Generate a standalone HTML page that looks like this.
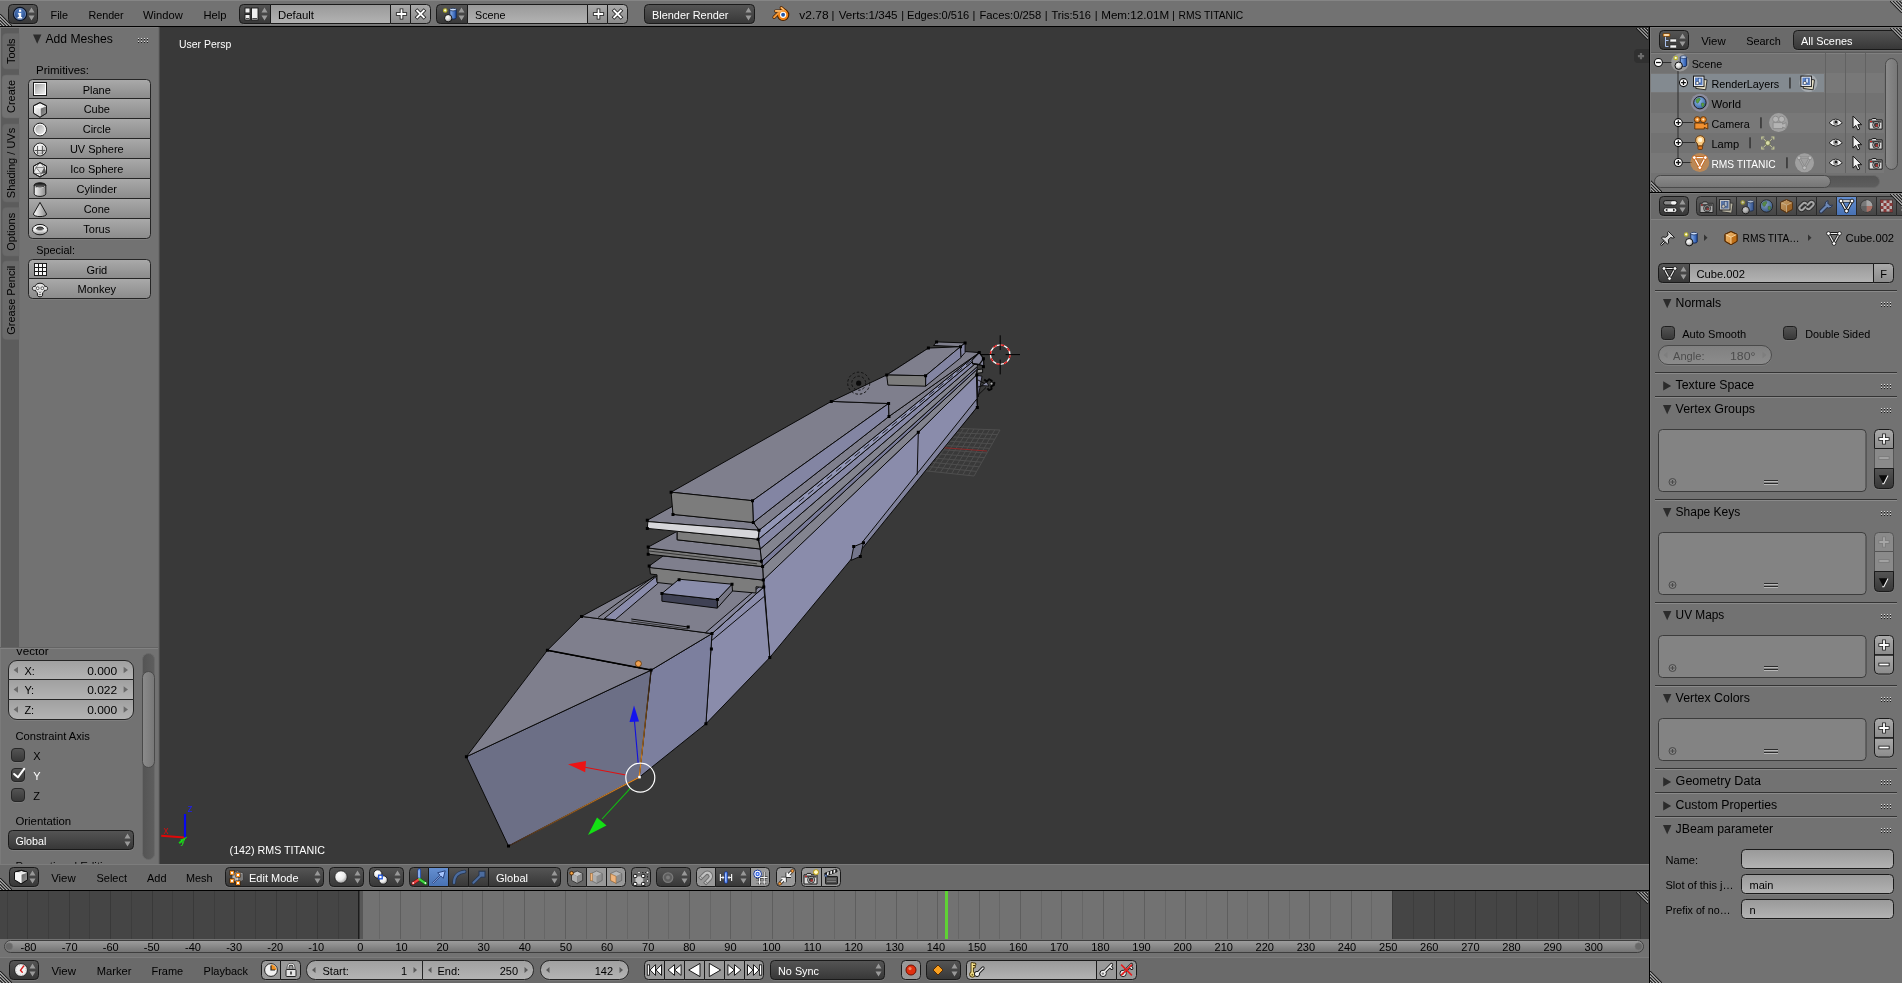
<!DOCTYPE html>
<html lang="en"><head><meta charset="utf-8"><title>Blender - RMS TITANIC</title>
<style>html,body{margin:0;padding:0;background:#727272;overflow:hidden}body{width:1902px;height:983px}svg{display:block;font-family:"Liberation Sans",sans-serif;will-change:transform}text{white-space:pre}</style></head><body>
<svg width="1902" height="983" viewBox="0 0 1902 983" font-family='"Liberation Sans", sans-serif' font-size="11">
<defs>
<linearGradient id="gTool" x1="0" y1="0" x2="0" y2="1"><stop offset="0" stop-color="#aaaaaa"/><stop offset="1" stop-color="#8b8b8b"/></linearGradient>
<linearGradient id="gMenu" x1="0" y1="0" x2="0" y2="1"><stop offset="0" stop-color="#555555"/><stop offset="1" stop-color="#373737"/></linearGradient>
<linearGradient id="gText" x1="0" y1="0" x2="0" y2="1"><stop offset="0" stop-color="#999999"/><stop offset="1" stop-color="#b3b3b3"/></linearGradient>
<linearGradient id="gNum" x1="0" y1="0" x2="0" y2="1"><stop offset="0" stop-color="#a0a0a0"/><stop offset="1" stop-color="#b4b4b4"/></linearGradient>
<linearGradient id="gNumDis" x1="0" y1="0" x2="0" y2="1"><stop offset="0" stop-color="#808080"/><stop offset="1" stop-color="#8c8c8c"/></linearGradient>
<linearGradient id="gSel" x1="0" y1="0" x2="0" y2="1"><stop offset="0" stop-color="#658fd1"/><stop offset="1" stop-color="#4771b3"/></linearGradient>
<linearGradient id="gOpt" x1="0" y1="0" x2="0" y2="1"><stop offset="0" stop-color="#555555"/><stop offset="1" stop-color="#373737"/></linearGradient>
<linearGradient id="gScroll" x1="0" y1="0" x2="0" y2="1"><stop offset="0" stop-color="#8b8b8b"/><stop offset="1" stop-color="#757575"/></linearGradient>
<linearGradient id="gScrollV" x1="0" y1="0" x2="1" y2="0"><stop offset="0" stop-color="#8b8b8b"/><stop offset="1" stop-color="#777777"/></linearGradient>
<linearGradient id="gScrollTrack" x1="0" y1="0" x2="0" y2="1"><stop offset="0" stop-color="#545454"/><stop offset="1" stop-color="#5e5e5e"/></linearGradient>
<linearGradient id="gScrollTrackV" x1="0" y1="0" x2="1" y2="0"><stop offset="0" stop-color="#545454"/><stop offset="1" stop-color="#5e5e5e"/></linearGradient>
<linearGradient id="gTlScroll" x1="0" y1="0" x2="0" y2="1"><stop offset="0" stop-color="#9e9e9e"/><stop offset="1" stop-color="#727272"/></linearGradient>
<radialGradient id="gBall" cx="0.4" cy="0.35" r="0.7"><stop offset="0" stop-color="#ffffff"/><stop offset="0.5" stop-color="#d8d8d8"/><stop offset="1" stop-color="#7a7a7a"/></radialGradient>
<radialGradient id="gBall2" cx="0.38" cy="0.32" r="0.75"><stop offset="0" stop-color="#ffffff"/><stop offset="0.55" stop-color="#ececec"/><stop offset="1" stop-color="#8c8c8c"/></radialGradient>
<radialGradient id="gInfo" cx="0.5" cy="0.4" r="0.6"><stop offset="0" stop-color="#5a86c8"/><stop offset="1" stop-color="#1c3f80"/></radialGradient>
<radialGradient id="gEarth" cx="0.4" cy="0.35" r="0.7"><stop offset="0" stop-color="#9cc4f0"/><stop offset="1" stop-color="#2d5a9c"/></radialGradient>
<linearGradient id="gCube" x1="0" y1="0" x2="1" y2="1"><stop offset="0" stop-color="#f4c27a"/><stop offset="1" stop-color="#c87820"/></linearGradient>
<linearGradient id="gCyl" x1="0" y1="0" x2="1" y2="0"><stop offset="0" stop-color="#8db4ee"/><stop offset="1" stop-color="#1f4fa8"/></linearGradient>
<linearGradient id="gPlane" x1="0" y1="0" x2="1" y2="1"><stop offset="0" stop-color="#9c9c9c"/><stop offset="1" stop-color="#fafafa"/></linearGradient>
<linearGradient id="gCubeR" x1="0" y1="0" x2="1" y2="1"><stop offset="0" stop-color="#5c5c5c"/><stop offset="1" stop-color="#a0a0a0"/></linearGradient>
<linearGradient id="gCubeL" x1="0" y1="0" x2="1" y2="1"><stop offset="0" stop-color="#ffffff"/><stop offset="1" stop-color="#c4c4c4"/></linearGradient>
<linearGradient id="gCylTop" x1="0" y1="0" x2="0" y2="1"><stop offset="0" stop-color="#0c0c0c"/><stop offset="1" stop-color="#7a7a7a"/></linearGradient>
<linearGradient id="gTorus" x1="0" y1="0" x2="0" y2="1"><stop offset="0" stop-color="#ffffff"/><stop offset="0.6" stop-color="#e8e8e8"/><stop offset="1" stop-color="#8a8a8a"/></linearGradient>
<linearGradient id="gCylG" x1="0" y1="0" x2="1" y2="0"><stop offset="0" stop-color="#f4f4f4"/><stop offset="1" stop-color="#8a8a8a"/></linearGradient>
<linearGradient id="gConeG" x1="0" y1="0" x2="1" y2="0"><stop offset="0" stop-color="#ffffff"/><stop offset="1" stop-color="#8a8a8a"/></linearGradient>
<linearGradient id="gTabBtn" x1="0" y1="0" x2="0" y2="1"><stop offset="0" stop-color="#5c5c5c"/><stop offset="1" stop-color="#454545"/></linearGradient>
</defs>
<g id="areas" >
<rect x="0" y="0" width="1902" height="983" fill="#727272"/>
<rect x="160" y="27" width="1489" height="837" fill="#393939"/>
<rect x="0" y="26" width="1902" height="1" fill="#000"/>
<rect x="1649" y="27" width="1" height="956" fill="#000"/>
</g>
<g id="info-header" >
<rect x="0" y="0" width="1902" height="26" fill="#727272"/>
<rect x="0" y="0" width="1902" height="1" fill="#858585"/>
<clipPath id="cc1"><rect x="0" y="14" width="12" height="12"/></clipPath><g clip-path="url(#cc1)">
<path d="M-1,13L13,27" fill="none" stroke="#1c1c1c" stroke-width="1.15"/>
<path d="M-1,14.6L11.4,27" fill="none" stroke="#b4b4b4" stroke-width="1.1"/>
<path d="M-1,16.2L9.8,27" fill="none" stroke="#1c1c1c" stroke-width="1.15"/>
<path d="M-1,17.8L8.2,27" fill="none" stroke="#b4b4b4" stroke-width="1.1"/>
<path d="M-1,19.4L6.6,27" fill="none" stroke="#1c1c1c" stroke-width="1.15"/>
<path d="M-1,21.0L5.0,27" fill="none" stroke="#b4b4b4" stroke-width="1.1"/>
<path d="M-1,22.6L3.4000000000000004,27" fill="none" stroke="#1c1c1c" stroke-width="1.15"/>
<path d="M-1,24.200000000000003L1.8000000000000007,27" fill="none" stroke="#b4b4b4" stroke-width="1.1"/>
</g>
<clipPath id="cc2"><rect x="1890" y="1" width="12" height="12"/></clipPath><g clip-path="url(#cc2)">
<path d="M1889,0L1903,14" fill="none" stroke="#1c1c1c" stroke-width="1.15"/>
<path d="M1890.6,0L1903,12.4" fill="none" stroke="#b4b4b4" stroke-width="1.1"/>
<path d="M1892.2,0L1903,10.8" fill="none" stroke="#1c1c1c" stroke-width="1.15"/>
<path d="M1893.8,0L1903,9.2" fill="none" stroke="#b4b4b4" stroke-width="1.1"/>
<path d="M1895.4,0L1903,7.6" fill="none" stroke="#1c1c1c" stroke-width="1.15"/>
<path d="M1897.0,0L1903,6.0" fill="none" stroke="#b4b4b4" stroke-width="1.1"/>
<path d="M1898.6,0L1903,4.4" fill="none" stroke="#1c1c1c" stroke-width="1.15"/>
<path d="M1900.1999999999998,0L1903,2.8000000000000007" fill="none" stroke="#b4b4b4" stroke-width="1.1"/>
</g>
<path d="M12.5,5.5H33.5A4,4 0 0 1 37.5,9.5V20.5A4,4 0 0 1 33.5,24.5H12.5A4,4 0 0 1 8.5,20.5V9.5A4,4 0 0 1 12.5,5.5Z" fill="none" stroke="rgba(255,255,255,0.09)" stroke-width="1"/>
<path d="M12.5,4.5H33.5A4,4 0 0 1 37.5,8.5V19.5A4,4 0 0 1 33.5,23.5H12.5A4,4 0 0 1 8.5,19.5V8.5A4,4 0 0 1 12.5,4.5Z" fill="url(#gMenu)" stroke="#1a1a1a" stroke-width="1"/>
<circle cx="20" cy="14" r="6.6" fill="url(#gInfo)" stroke="#0c1424" stroke-width="1.2"/>
<circle cx="20" cy="14" r="5.6" fill="none" stroke="rgba(255,255,255,0.35)" stroke-width="0.8"/>
<rect x="19" y="9.6" width="2.2" height="2.2" fill="#fff"/>
<path d="M18.2,13h3v4h1v1.4h-4.6v-1.4h1.2v-2.6h-0.6z" fill="#fff"/>
<path d="M28.5,12.5L31.5,7.5L34.5,12.5Z M28.5,15.5L31.5,20.5L34.5,15.5Z" fill="#999"/>
<text x="50.5" y="19.2" font-size="11" fill="#000" textLength="17.5" lengthAdjust="spacingAndGlyphs">File</text>
<text x="88.4" y="19.2" font-size="11" fill="#000" textLength="35.3" lengthAdjust="spacingAndGlyphs">Render</text>
<text x="143" y="19.2" font-size="11" fill="#000" textLength="39.7" lengthAdjust="spacingAndGlyphs">Window</text>
<text x="203.4" y="19.2" font-size="11" fill="#000" textLength="23" lengthAdjust="spacingAndGlyphs">Help</text>
<line x1="243" y1="24.5" x2="271" y2="24.5" stroke="rgba(255,255,255,0.09)" stroke-width="1" />
<path d="M243.5,4.5H270.5V23.5H243.5A4,4 0 0 1 239.5,19.5V8.5A4,4 0 0 1 243.5,4.5Z" fill="url(#gMenu)" stroke="#1a1a1a" stroke-width="1"/>
<rect x="245" y="8" width="5" height="5" fill="#f0f0f0" stroke="#1c1c1c" stroke-width="0.9"/>
<rect x="245" y="14.5" width="5" height="5.5" fill="#f0f0f0" stroke="#1c1c1c" stroke-width="0.9"/>
<rect x="251.5" y="8" width="6.5" height="12" fill="#f0f0f0" stroke="#1c1c1c" stroke-width="0.9"/>
<rect x="245.8" y="18" width="3.4" height="1.2" fill="#4a4a4a"/>
<rect x="252.3" y="18" width="4.9" height="1.2" fill="#4a4a4a"/>
<path d="M261.5,12.5L264.5,7.5L267.5,12.5Z M261.5,15.5L264.5,20.5L267.5,15.5Z" fill="#999"/>
<line x1="270" y1="24.5" x2="391" y2="24.5" stroke="rgba(255,255,255,0.09)" stroke-width="1" />
<path d="M270.5,4.5H390.5V23.5H270.5V4.5Z" fill="url(#gText)" stroke="#1a1a1a" stroke-width="1"/>
<text x="278" y="19.2" font-size="11" fill="#000" textLength="36" lengthAdjust="spacingAndGlyphs">Default</text>
<line x1="390" y1="24.5" x2="411" y2="24.5" stroke="rgba(255,255,255,0.09)" stroke-width="1" />
<path d="M390.5,4.5H410.5V23.5H390.5V4.5Z" fill="url(#gTool)" stroke="#1a1a1a" stroke-width="1"/>
<path d="M395.9,14h11.2M401.5,8.4v11.2" fill="none" stroke="#222" stroke-width="3.6"/>
<path d="M396.8,14h9.4M401.5,9.3v9.4" fill="none" stroke="#fff" stroke-width="1.8"/>
<line x1="410" y1="24.5" x2="427" y2="24.5" stroke="rgba(255,255,255,0.09)" stroke-width="1" />
<path d="M410.5,4.5H426.5A4,4 0 0 1 430.5,8.5V19.5A4,4 0 0 1 426.5,23.5H410.5V4.5Z" fill="url(#gTool)" stroke="#1a1a1a" stroke-width="1"/>
<path d="M416.0,9.5l9,9M425.0,9.5l-9,9" fill="none" stroke="#222" stroke-width="3.6"/>
<path d="M416.5,10l8,8M424.5,10l-8,8" fill="none" stroke="#fff" stroke-width="1.8"/>
<line x1="440" y1="24.5" x2="468" y2="24.5" stroke="rgba(255,255,255,0.09)" stroke-width="1" />
<path d="M440.5,4.5H467.5V23.5H440.5A4,4 0 0 1 436.5,19.5V8.5A4,4 0 0 1 440.5,4.5Z" fill="url(#gMenu)" stroke="#1a1a1a" stroke-width="1"/>
<path d="M449.8,9.6v8.2a3.2,1.3 0 0 0 6.4,0v-8.2z" fill="url(#gCyl)" stroke="#0e2450" stroke-width="0.9"/>
<path d="M449.8,9.6a3.2,1.3 0 0 1 6.4,0a3.2,1.3 0 0 1 -6.4,0z" fill="#cfe0fa" stroke="#0e2450" stroke-width="0.7"/>
<circle cx="448.2" cy="18.2" r="3.7" fill="url(#gBall)" stroke="#111" stroke-width="1"/>
<circle cx="445.2" cy="10.4" r="1.7" fill="#fffce0" stroke="#b8b428" stroke-width="1.1"/>
<path d="M458.5,12.5L461.5,7.5L464.5,12.5Z M458.5,15.5L461.5,20.5L464.5,15.5Z" fill="#999"/>
<line x1="467" y1="24.5" x2="588" y2="24.5" stroke="rgba(255,255,255,0.09)" stroke-width="1" />
<path d="M467.5,4.5H587.5V23.5H467.5V4.5Z" fill="url(#gText)" stroke="#1a1a1a" stroke-width="1"/>
<text x="475" y="19.2" font-size="11" fill="#000" textLength="30.5" lengthAdjust="spacingAndGlyphs">Scene</text>
<line x1="587" y1="24.5" x2="608" y2="24.5" stroke="rgba(255,255,255,0.09)" stroke-width="1" />
<path d="M587.5,4.5H607.5V23.5H587.5V4.5Z" fill="url(#gTool)" stroke="#1a1a1a" stroke-width="1"/>
<path d="M592.9,14h11.2M598.5,8.4v11.2" fill="none" stroke="#222" stroke-width="3.6"/>
<path d="M593.8,14h9.4M598.5,9.3v9.4" fill="none" stroke="#fff" stroke-width="1.8"/>
<line x1="607" y1="24.5" x2="624" y2="24.5" stroke="rgba(255,255,255,0.09)" stroke-width="1" />
<path d="M607.5,4.5H623.5A4,4 0 0 1 627.5,8.5V19.5A4,4 0 0 1 623.5,23.5H607.5V4.5Z" fill="url(#gTool)" stroke="#1a1a1a" stroke-width="1"/>
<path d="M613.0,9.5l9,9M622.0,9.5l-9,9" fill="none" stroke="#222" stroke-width="3.6"/>
<path d="M613.5,10l8,8M621.5,10l-8,8" fill="none" stroke="#fff" stroke-width="1.8"/>
<path d="M648.5,5.5H750.5A4,4 0 0 1 754.5,9.5V20.5A4,4 0 0 1 750.5,24.5H648.5A4,4 0 0 1 644.5,20.5V9.5A4,4 0 0 1 648.5,5.5Z" fill="none" stroke="rgba(255,255,255,0.09)" stroke-width="1"/>
<path d="M648.5,4.5H750.5A4,4 0 0 1 754.5,8.5V19.5A4,4 0 0 1 750.5,23.5H648.5A4,4 0 0 1 644.5,19.5V8.5A4,4 0 0 1 648.5,4.5Z" fill="url(#gMenu)" stroke="#1a1a1a" stroke-width="1"/>
<text x="652" y="19.2" font-size="11" fill="#fff" textLength="76.5" lengthAdjust="spacingAndGlyphs">Blender Render</text>
<path d="M745.5,12.5L748.5,7.5L751.5,12.5Z M745.5,15.5L748.5,20.5L751.5,15.5Z" fill="#999"/>
<path d="M781.3,7.9L785.4,11.2M775.7,11.1L782.5,11.3M774.1,17.3L779.8,11.6" fill="none" stroke="#4a2200" stroke-width="3.4" stroke-linecap="round"/>
<circle cx="783.1" cy="14.8" r="5.7" fill="#f08010" stroke="#4a2200" stroke-width="1.1"/>
<path d="M781.3,7.9L785.4,11.2M775.7,11.1L782.5,11.3M774.1,17.3L779.8,11.6" fill="none" stroke="#f59a38" stroke-width="2" stroke-linecap="round"/>
<path d="M775.9,10.8L781.5,10.9M781.6,7.9l2,1.6" fill="none" stroke="#ffd8a0" stroke-width="0.8" stroke-linecap="round"/>
<circle cx="783.1" cy="14.8" r="3.15" fill="#fff"/>
<circle cx="783.1" cy="14.8" r="1.95" fill="#2458a8"/>
<text x="799.3" y="19.2" font-size="11" fill="#000" textLength="29.3" lengthAdjust="spacingAndGlyphs">v2.78</text>
<text x="838.7" y="19.2" font-size="11" fill="#000" textLength="58.9" lengthAdjust="spacingAndGlyphs">Verts:1/345</text>
<text x="907" y="19.2" font-size="11" fill="#000" textLength="62.3" lengthAdjust="spacingAndGlyphs">Edges:0/516</text>
<text x="979.4" y="19.2" font-size="11" fill="#000" textLength="61.9" lengthAdjust="spacingAndGlyphs">Faces:0/258</text>
<text x="1051.4" y="19.2" font-size="11" fill="#000" textLength="39.6" lengthAdjust="spacingAndGlyphs">Tris:516</text>
<text x="1101.2" y="19.2" font-size="11" fill="#000" textLength="67.9" lengthAdjust="spacingAndGlyphs">Mem:12.01M</text>
<text x="1178.5" y="19.2" font-size="11" fill="#000" textLength="64.7" lengthAdjust="spacingAndGlyphs">RMS TITANIC</text>
<text x="833" y="19.2" font-size="11" fill="#000" text-anchor="middle">|</text>
<text x="902.6" y="19.2" font-size="11" fill="#000" text-anchor="middle">|</text>
<text x="974" y="19.2" font-size="11" fill="#000" text-anchor="middle">|</text>
<text x="1046.3" y="19.2" font-size="11" fill="#000" text-anchor="middle">|</text>
<text x="1096.1" y="19.2" font-size="11" fill="#000" text-anchor="middle">|</text>
<text x="1173.5" y="19.2" font-size="11" fill="#000" text-anchor="middle">|</text>
</g>
<g id="tool-shelf" >
<rect x="0" y="27" width="158" height="837" fill="#727272"/>
<rect x="0" y="27" width="158" height="1" fill="#7e7e7e"/>
<rect x="158" y="27" width="1" height="837" fill="#6a6a6a"/>
<rect x="159" y="27" width="1" height="837" fill="#4e4e4e"/>
<rect x="0" y="27" width="1" height="837" fill="#7a7a7a"/>
<rect x="1" y="28" width="18" height="620" fill="#5c5c5c"/>
<path d="M19,33.5H6.5a4,4 0 0 0 -4,4V65a4,4 0 0 0 4,4H19z" fill="#6a6a6a" stroke="#646464" stroke-width="0.6"/>
<text transform="translate(14.6,51.25) rotate(-90)" text-anchor="middle" font-size="11" fill="#000">Tools</text>
<path d="M20,75H6a4,4 0 0 0 -4,4V114a4,4 0 0 0 4,4H20z" fill="#727272" stroke="#6a6a6a" stroke-width="0.6"/>
<rect x="19" y="75.3" width="2" height="42.4" fill="#727272"/>
<text transform="translate(14.6,96.5) rotate(-90)" text-anchor="middle" font-size="11" fill="#000">Create</text>
<path d="M19,124H6.5a4,4 0 0 0 -4,4V198a4,4 0 0 0 4,4H19z" fill="#6a6a6a" stroke="#646464" stroke-width="0.6"/>
<text transform="translate(14.6,163.0) rotate(-90)" text-anchor="middle" font-size="11" fill="#000">Shading / UVs</text>
<path d="M19,207.5H6.5a4,4 0 0 0 -4,4V252a4,4 0 0 0 4,4H19z" fill="#6a6a6a" stroke="#646464" stroke-width="0.6"/>
<text transform="translate(14.6,231.75) rotate(-90)" text-anchor="middle" font-size="11" fill="#000">Options</text>
<path d="M19,261H6.5a4,4 0 0 0 -4,4V335.5a4,4 0 0 0 4,4H19z" fill="#6a6a6a" stroke="#646464" stroke-width="0.6"/>
<text transform="translate(14.6,300.25) rotate(-90)" text-anchor="middle" font-size="11" fill="#000">Grease Pencil</text>
<rect x="0" y="647" width="158" height="1" fill="#646464"/>
<rect x="0" y="648" width="158" height="1" fill="#828282"/>
<path d="M33,34.5h8.4l-4.2,9.2z" fill="#2b2b2b"/>
<text x="45.5" y="42.7" font-size="12" fill="#000" textLength="67.3" lengthAdjust="spacingAndGlyphs">Add Meshes</text>
<rect x="138" y="38" width="1" height="1" fill="#dcdcdc"/>
<rect x="138" y="39" width="1" height="1" fill="#1c1c1c"/>
<rect x="138" y="41" width="1" height="1" fill="#dcdcdc"/>
<rect x="138" y="42" width="1" height="1" fill="#1c1c1c"/>
<rect x="141" y="38" width="1" height="1" fill="#dcdcdc"/>
<rect x="141" y="39" width="1" height="1" fill="#1c1c1c"/>
<rect x="141" y="41" width="1" height="1" fill="#dcdcdc"/>
<rect x="141" y="42" width="1" height="1" fill="#1c1c1c"/>
<rect x="144" y="38" width="1" height="1" fill="#dcdcdc"/>
<rect x="144" y="39" width="1" height="1" fill="#1c1c1c"/>
<rect x="144" y="41" width="1" height="1" fill="#dcdcdc"/>
<rect x="144" y="42" width="1" height="1" fill="#1c1c1c"/>
<rect x="147" y="38" width="1" height="1" fill="#dcdcdc"/>
<rect x="147" y="39" width="1" height="1" fill="#1c1c1c"/>
<rect x="147" y="41" width="1" height="1" fill="#dcdcdc"/>
<rect x="147" y="42" width="1" height="1" fill="#1c1c1c"/>
<text x="36" y="73.7" font-size="11" fill="#000" textLength="53" lengthAdjust="spacingAndGlyphs">Primitives:</text>
<path d="M32.5,79.5H146.5A4,4 0 0 1 150.5,83.5V98.5H28.5V83.5A4,4 0 0 1 32.5,79.5Z" fill="url(#gTool)" stroke="#252525" stroke-width="1"/>
<rect x="33.5" y="82.5" width="13" height="13" fill="url(#gPlane)" stroke="#1a1a1a" stroke-width="1"/>
<rect x="34.5" y="83.5" width="11" height="11" fill="none" stroke="#fff" stroke-width="1"/>
<text x="96.8" y="94.2" font-size="11" fill="#000" text-anchor="middle">Plane</text>
<path d="M28.5,98.5H150.5V118.5H28.5V98.5Z" fill="url(#gTool)" stroke="#252525" stroke-width="1"/>
<path d="M40,102.6l6.5,3.2v7.4l-6.5,4l-6.5,-4v-7.4z" fill="#f4f4f4" stroke="#1a1a1a" stroke-width="1" stroke-linejoin="round"/>
<path d="M40.2,108.2l6.3,-2.4v7.4l-6.3,4z" fill="url(#gCubeR)"/>
<path d="M40.2,108.2l-6.7,-2.4v7.4l6.7,4z" fill="url(#gCubeL)"/>
<path d="M33.8,106l6.4,2.3l6,-2.3M40.2,108.3v8.4" fill="none" stroke="rgba(255,255,255,0.9)" stroke-width="0.8"/>
<path d="M40,102.6l6.5,3.2v7.4l-6.5,4l-6.5,-4v-7.4z" fill="none" stroke="#1a1a1a" stroke-width="1" stroke-linejoin="round"/>
<text x="96.8" y="113.2" font-size="11" fill="#000" text-anchor="middle">Cube</text>
<path d="M28.5,118.5H150.5V138.5H28.5V118.5Z" fill="url(#gTool)" stroke="#252525" stroke-width="1"/>
<circle cx="40" cy="129.5" r="6.4" fill="url(#gPlane)" stroke="#1a1a1a" stroke-width="1"/>
<circle cx="40" cy="129.5" r="5.3" fill="none" stroke="#fff" stroke-width="1.1"/>
<text x="96.8" y="133.2" font-size="11" fill="#000" text-anchor="middle">Circle</text>
<path d="M28.5,138.5H150.5V158.5H28.5V138.5Z" fill="url(#gTool)" stroke="#252525" stroke-width="1"/>
<circle cx="40" cy="149.5" r="6.4" fill="url(#gBall)" stroke="#1a1a1a" stroke-width="1"/>
<circle cx="40" cy="149.5" r="5.4" fill="none" stroke="rgba(255,255,255,0.9)" stroke-width="0.9"/>
<path d="M34.6,150.5h10.8M37.6,146v8.6M42.4,146v8.6" fill="none" stroke="#4a4a4a" stroke-width="0.9"/>
<text x="96.8" y="153.2" font-size="11" fill="#000" text-anchor="middle">UV Sphere</text>
<path d="M28.5,158.5H150.5V178.5H28.5V158.5Z" fill="url(#gTool)" stroke="#252525" stroke-width="1"/>
<path d="M40,162.6l6.5,3.6v7l-6.5,3.8l-6.5,-3.8v-7z" fill="#ececec" stroke="#1a1a1a" stroke-width="1" stroke-linejoin="round"/>
<path d="M36,167.4h8.6l-3.4,6.4z" fill="#dcdcdc" stroke="#555" stroke-width="0.7"/>
<path d="M44.6,167.4l1.9,5.8l-5.3,0.6z" fill="#555"/>
<path d="M40,162.6l-4,4.8M40,162.6l4.6,4.8M36,167.4l-2.5,5.8M41.2,173.8l-1.2,3.2M41.2,173.8l-7.7,-.6" fill="none" stroke="#666" stroke-width="0.7"/>
<path d="M40,162.6l6.5,3.6v7l-6.5,3.8l-6.5,-3.8v-7z" fill="none" stroke="#1a1a1a" stroke-width="1" stroke-linejoin="round"/>
<text x="96.8" y="173.2" font-size="11" fill="#000" text-anchor="middle">Ico Sphere</text>
<path d="M28.5,178.5H150.5V198.5H28.5V178.5Z" fill="url(#gTool)" stroke="#252525" stroke-width="1"/>
<path d="M34.2,185.2v8.6a5.8,2.6 0 0 0 11.6,0v-8.6z" fill="url(#gCylG)" stroke="#1a1a1a" stroke-width="1"/>
<path d="M34.2,185.2a5.8,2.4 0 0 1 11.6,0a5.8,2.4 0 0 1 -11.6,0z" fill="url(#gCylTop)" stroke="#1a1a1a" stroke-width="1"/>
<path d="M35.2,186.2a4.8,1.6 0 0 0 9.6,0" fill="none" stroke="#e8e8e8" stroke-width="0.8"/>
<text x="96.8" y="193.2" font-size="11" fill="#000" text-anchor="middle">Cylinder</text>
<path d="M28.5,198.5H150.5V218.5H28.5V198.5Z" fill="url(#gTool)" stroke="#252525" stroke-width="1"/>
<path d="M40,202.4l6.6,11.6a6.6,2.6 0 0 1 -13.2,0z" fill="url(#gConeG)" stroke="#1a1a1a" stroke-width="1" stroke-linejoin="round"/>
<text x="96.8" y="213.2" font-size="11" fill="#000" text-anchor="middle">Cone</text>
<path d="M28.5,219.5H150.5V235.5A4,4 0 0 1 146.5,239.5H32.5A4,4 0 0 1 28.5,235.5V219.5Z" fill="none" stroke="rgba(255,255,255,0.09)" stroke-width="1"/>
<path d="M28.5,218.5H150.5V234.5A4,4 0 0 1 146.5,238.5H32.5A4,4 0 0 1 28.5,234.5V218.5Z" fill="url(#gTool)" stroke="#252525" stroke-width="1"/>
<path d="M32.4,229.6a7.6,5.2 0 1 0 15.2,0a7.6,5.2 0 1 0 -15.2,0z" fill="url(#gTorus)" stroke="#1a1a1a" stroke-width="1"/>
<path d="M36.6,228.6a3.4,1.6 0 1 0 6.8,0a3.4,1.6 0 1 0 -6.8,0z" fill="#5a5a5a" stroke="#1a1a1a" stroke-width="1"/>
<path d="M37,229.2a3,1.2 0 0 0 6,0" fill="none" stroke="#ddd" stroke-width="0.7"/>
<text x="96.8" y="233.2" font-size="11" fill="#000" text-anchor="middle">Torus</text>
<text x="36.3" y="253.7" font-size="11" fill="#000" textLength="38.6" lengthAdjust="spacingAndGlyphs">Special:</text>
<path d="M32.5,259.5H146.5A4,4 0 0 1 150.5,263.5V278.5H28.5V263.5A4,4 0 0 1 32.5,259.5Z" fill="url(#gTool)" stroke="#252525" stroke-width="1"/>
<rect x="34" y="263" width="13" height="13" fill="#1a1a1a"/>
<rect x="35" y="264" width="3" height="3" fill="#f8f8f8"/>
<rect x="35" y="268" width="3" height="3" fill="#f8f8f8"/>
<rect x="35" y="272" width="3" height="3" fill="#f8f8f8"/>
<rect x="39" y="264" width="3" height="3" fill="#f8f8f8"/>
<rect x="39" y="268" width="3" height="3" fill="#f8f8f8"/>
<rect x="39" y="272" width="3" height="3" fill="#f8f8f8"/>
<rect x="43" y="264" width="3" height="3" fill="#f8f8f8"/>
<rect x="43" y="268" width="3" height="3" fill="#f8f8f8"/>
<rect x="43" y="272" width="3" height="3" fill="#f8f8f8"/>
<text x="96.8" y="274.2" font-size="11" fill="#000" text-anchor="middle">Grid</text>
<path d="M28.5,279.5H150.5V295.5A4,4 0 0 1 146.5,299.5H32.5A4,4 0 0 1 28.5,295.5V279.5Z" fill="none" stroke="rgba(255,255,255,0.09)" stroke-width="1"/>
<path d="M28.5,278.5H150.5V294.5A4,4 0 0 1 146.5,298.5H32.5A4,4 0 0 1 28.5,294.5V278.5Z" fill="url(#gTool)" stroke="#252525" stroke-width="1"/>
<path d="M40.0,283.2c3,0 4.6,1.6 4.8,3.4c1.4,-0.8 2.8,0.2 2.8,1.8c0,1.6 -1.4,2.4 -3,1.8c-0.4,1.6 -1.4,2.2 -2,2.6v2.2c0,1.2 -1.2,1.8 -2.6,1.8c-1.4,0 -2.6,-0.6 -2.6,-1.8v-2.2c-0.6,-0.4 -1.6,-1 -2,-2.6c-1.6,0.6 -3,-0.2 -3,-1.8c0,-1.6 1.4,-2.6 2.8,-1.8c0.2,-1.8 1.8,-3.4 4.8,-3.4z" fill="#e4e4e4" stroke="#1a1a1a" stroke-width="1"/>
<circle cx="37.7" cy="288.2" r="1.4" fill="#fff" stroke="#333" stroke-width="0.8"/>
<circle cx="42.3" cy="288.2" r="1.4" fill="#fff" stroke="#333" stroke-width="0.8"/>
<path d="M39.0,291.6l1,1.2l1,-1.2M38.7,294.6h2.6" fill="none" stroke="#444" stroke-width="0.8"/>
<text x="96.8" y="293.2" font-size="11" fill="#000" text-anchor="middle">Monkey</text>
<clipPath id="clipOp"><rect x="0" y="649" width="158" height="214.7"/></clipPath>
<g clip-path="url(#clipOp)">
<text x="15.6" y="654.7" font-size="11" fill="#000" textLength="33" lengthAdjust="spacingAndGlyphs">Vector</text>
<path d="M17.0,660.5H125.0A8.5,8.5 0 0 1 133.5,669.0V679.5H8.5V669.0A8.5,8.5 0 0 1 17.0,660.5Z" fill="url(#gNum)" stroke="#252525" stroke-width="1"/>
<path d="M13.6,670l4.4,-3.2v6.4z" fill="#6a6a6a"/>
<path d="M128,670l-4.4,-3.2v6.4z" fill="#6a6a6a"/>
<text x="24.4" y="674.5" font-size="11" fill="#000">X:</text>
<text x="117.2" y="674.5" font-size="11" fill="#000" text-anchor="end" textLength="30" lengthAdjust="spacingAndGlyphs">0.000</text>
<path d="M8.5,679.5H133.5V699.5H8.5V679.5Z" fill="url(#gNum)" stroke="#252525" stroke-width="1"/>
<path d="M13.6,689.5l4.4,-3.2v6.4z" fill="#6a6a6a"/>
<path d="M128,689.5l-4.4,-3.2v6.4z" fill="#6a6a6a"/>
<text x="24.4" y="694.0" font-size="11" fill="#000">Y:</text>
<text x="117.2" y="694.0" font-size="11" fill="#000" text-anchor="end" textLength="30" lengthAdjust="spacingAndGlyphs">0.022</text>
<path d="M8.5,700.5H133.5V712.0A8.5,8.5 0 0 1 125.0,720.5H17.0A8.5,8.5 0 0 1 8.5,712.0V700.5Z" fill="none" stroke="rgba(255,255,255,0.09)" stroke-width="1"/>
<path d="M8.5,699.5H133.5V711.0A8.5,8.5 0 0 1 125.0,719.5H17.0A8.5,8.5 0 0 1 8.5,711.0V699.5Z" fill="url(#gNum)" stroke="#252525" stroke-width="1"/>
<path d="M13.6,709.5l4.4,-3.2v6.4z" fill="#6a6a6a"/>
<path d="M128,709.5l-4.4,-3.2v6.4z" fill="#6a6a6a"/>
<text x="24.4" y="714.0" font-size="11" fill="#000">Z:</text>
<text x="117.2" y="714.0" font-size="11" fill="#000" text-anchor="end" textLength="30" lengthAdjust="spacingAndGlyphs">0.000</text>
<text x="15.4" y="739.6" font-size="11" fill="#000" textLength="74.5" lengthAdjust="spacingAndGlyphs">Constraint Axis</text>
<path d="M15.0,749.5H21.0A3.5,3.5 0 0 1 24.5,753.0V759.0A3.5,3.5 0 0 1 21.0,762.5H15.0A3.5,3.5 0 0 1 11.5,759.0V753.0A3.5,3.5 0 0 1 15.0,749.5Z" fill="none" stroke="rgba(255,255,255,0.09)" stroke-width="1"/>
<path d="M15.0,748.5H21.0A3.5,3.5 0 0 1 24.5,752.0V758.0A3.5,3.5 0 0 1 21.0,761.5H15.0A3.5,3.5 0 0 1 11.5,758.0V752.0A3.5,3.5 0 0 1 15.0,748.5Z" fill="url(#gOpt)" stroke="#262626" stroke-width="1"/>
<text x="33.2" y="759.8" font-size="11" fill="#000">X</text>
<path d="M15.0,769.5H21.0A3.5,3.5 0 0 1 24.5,773.0V779.0A3.5,3.5 0 0 1 21.0,782.5H15.0A3.5,3.5 0 0 1 11.5,779.0V773.0A3.5,3.5 0 0 1 15.0,769.5Z" fill="none" stroke="rgba(255,255,255,0.09)" stroke-width="1"/>
<path d="M15.0,768.5H21.0A3.5,3.5 0 0 1 24.5,772.0V778.0A3.5,3.5 0 0 1 21.0,781.5H15.0A3.5,3.5 0 0 1 11.5,778.0V772.0A3.5,3.5 0 0 1 15.0,768.5Z" fill="url(#gOpt)" stroke="#262626" stroke-width="1"/>
<path d="M14.1,774l3.8,3.3l6.4,-8.6" fill="none" stroke="#fff" stroke-width="2" stroke-linecap="round" stroke-linejoin="round"/>
<text x="33.2" y="779.8" font-size="11" fill="#fff">Y</text>
<path d="M15.0,789.5H21.0A3.5,3.5 0 0 1 24.5,793.0V799.0A3.5,3.5 0 0 1 21.0,802.5H15.0A3.5,3.5 0 0 1 11.5,799.0V793.0A3.5,3.5 0 0 1 15.0,789.5Z" fill="none" stroke="rgba(255,255,255,0.09)" stroke-width="1"/>
<path d="M15.0,788.5H21.0A3.5,3.5 0 0 1 24.5,792.0V798.0A3.5,3.5 0 0 1 21.0,801.5H15.0A3.5,3.5 0 0 1 11.5,798.0V792.0A3.5,3.5 0 0 1 15.0,788.5Z" fill="url(#gOpt)" stroke="#262626" stroke-width="1"/>
<text x="33.2" y="799.8" font-size="11" fill="#000">Z</text>
<text x="15.4" y="824.6" font-size="11" fill="#000" textLength="55.8" lengthAdjust="spacingAndGlyphs">Orientation</text>
<path d="M12.5,831.5H129.5A4,4 0 0 1 133.5,835.5V846.5A4,4 0 0 1 129.5,850.5H12.5A4,4 0 0 1 8.5,846.5V835.5A4,4 0 0 1 12.5,831.5Z" fill="none" stroke="rgba(255,255,255,0.09)" stroke-width="1"/>
<path d="M12.5,830.5H129.5A4,4 0 0 1 133.5,834.5V845.5A4,4 0 0 1 129.5,849.5H12.5A4,4 0 0 1 8.5,845.5V834.5A4,4 0 0 1 12.5,830.5Z" fill="url(#gMenu)" stroke="#1a1a1a" stroke-width="1"/>
<text x="15.4" y="844.5" font-size="11" fill="#fff" textLength="31" lengthAdjust="spacingAndGlyphs">Global</text>
<path d="M124.5,838.5L127.5,833.5L130.5,838.5Z M124.5,841.5L127.5,846.5L130.5,841.5Z" fill="#999"/>
<text x="15.4" y="869.8" font-size="11" fill="#000" textLength="100" lengthAdjust="spacingAndGlyphs">Proportional Editing</text>
<path d="M148.5,653.5H148.5A6,6 0 0 1 154.5,659.5V853.5A6,6 0 0 1 148.5,859.5H148.5A6,6 0 0 1 142.5,853.5V659.5A6,6 0 0 1 148.5,653.5Z" fill="url(#gScrollTrackV)" stroke="#696969" stroke-width="1"/>
<path d="M148.5,671.5H148.5A6,6 0 0 1 154.5,677.5V761.5A6,6 0 0 1 148.5,767.5H148.5A6,6 0 0 1 142.5,761.5V677.5A6,6 0 0 1 148.5,671.5Z" fill="url(#gScrollV)" stroke="#4a4a4a" stroke-width="1"/>
</g>
</g>
<g id="viewport3d" >
<text x="179" y="47.6" font-size="11" fill="#fff" textLength="52.3" lengthAdjust="spacingAndGlyphs">User Persp</text>
<path d="M1649,49H1638a4,4 0 0 0 -4,4v6a4,4 0 0 0 4,4H1649z" fill="#303030"/>
<path d="M1637.9,56.1h6.2M1641,53v6.2" fill="none" stroke="#6c6c6c" stroke-width="2.2"/>
<clipPath id="cc3"><rect x="1636" y="28" width="12" height="12"/></clipPath><g clip-path="url(#cc3)">
<path d="M1635,27L1649,41" fill="none" stroke="#1c1c1c" stroke-width="1.15"/>
<path d="M1636.6,27L1649,39.4" fill="none" stroke="#b4b4b4" stroke-width="1.1"/>
<path d="M1638.2,27L1649,37.8" fill="none" stroke="#1c1c1c" stroke-width="1.15"/>
<path d="M1639.8,27L1649,36.199999999999996" fill="none" stroke="#b4b4b4" stroke-width="1.1"/>
<path d="M1641.4,27L1649,34.6" fill="none" stroke="#1c1c1c" stroke-width="1.15"/>
<path d="M1643.0,27L1649,33.0" fill="none" stroke="#b4b4b4" stroke-width="1.1"/>
<path d="M1644.6,27L1649,31.4" fill="none" stroke="#1c1c1c" stroke-width="1.15"/>
<path d="M1646.1999999999998,27L1649,29.799999999999997" fill="none" stroke="#b4b4b4" stroke-width="1.1"/>
</g>
<g id="floor-grid" stroke="#4e4e4e" stroke-width="1" fill="none">
<path d="M948.0,428.0L918.0,470.0M948.0,428.0L1000.0,430.0M953.2,428.2L923.6,470.6M945.0,432.2L997.4,434.6M958.4,428.4L929.2,471.2M942.0,436.4L994.8,439.2M963.6,428.6L934.8,471.8M939.0,440.6L992.2,443.8M968.8,428.8L940.4,472.4M936.0,444.8L989.6,448.4M974.0,429.0L946.0,473.0M933.0,449.0L987.0,453.0M979.2,429.2L951.6,473.6M930.0,453.2L984.4,457.6M984.4,429.4L957.2,474.2M927.0,457.4L981.8,462.2M989.6,429.6L962.8,474.8M924.0,461.6L979.2,466.8M994.8,429.8L968.4,475.4M921.0,465.8L976.6,471.4M1000.0,430.0L974.0,476.0M918.0,470.0L974.0,476.0"/>
</g>
<path d="M941,447.5L987,451" fill="none" stroke="#8a2a2a" stroke-width="1.2"/>
<g id="ship" >
<polygon points="763.8,578.9 918.3,432.3 976.4,375.0 977.5,406.6 769.8,657.5" fill="#8a8cab" stroke="#0a0a0a" stroke-width="1" stroke-linejoin="round"/>
<polygon points="853.0,560.0 977.5,406.6 976.8,399.0 862.5,542.0" fill="#80829c" stroke="#0a0a0a" stroke-width="1" stroke-linejoin="round"/>
<polygon points="712.0,633.6 763.8,586.9 769.8,657.5 705.9,723.8" fill="#8a8cab" stroke="#0a0a0a" stroke-width="1" stroke-linejoin="round"/>
<polygon points="651.1,670.1 712.0,633.6 705.9,723.8 639.2,777.3" fill="#7c7f9e" stroke="#0a0a0a" stroke-width="1" stroke-linejoin="round"/>
<polygon points="466.4,756.7 651.1,670.1 639.2,777.3 508.5,846.1" fill="#6c6f86" stroke="#0a0a0a" stroke-width="1" stroke-linejoin="round"/>
<polygon points="466.4,756.7 547.4,650.3 651.1,670.1" fill="#7f7f8d" stroke="#0a0a0a" stroke-width="1" stroke-linejoin="round"/>
<polygon points="547.4,650.3 581.5,616.4 712.0,633.6 651.1,670.1" fill="#7f7f8d" stroke="#0a0a0a" stroke-width="1" stroke-linejoin="round"/>
<path d="M918.3,432.3L917.2,474.5" fill="none" stroke="#0a0a0a" stroke-width="1" stroke-linejoin="round"/>
<polygon points="853.7,546.6 863.5,542.7 860.3,556.4 851.0,560.4" fill="#74768c" stroke="#0a0a0a" stroke-width="1" stroke-linejoin="round"/>
<polygon points="581.5,616.4 655.3,576.3 763.8,586.9 712.0,633.6" fill="#7f7f8d" stroke="#0a0a0a" stroke-width="1" stroke-linejoin="round"/>
<polygon points="604.2,618.6 615.2,619.8 657.8,583.5 655.8,576.8" fill="#8a8cab" stroke="#0a0a0a" stroke-width="1" stroke-linejoin="round"/>
<path d="M598.1,617.4L654.5,576.0" fill="none" stroke="#0a0a0a" stroke-width="1" stroke-linejoin="round"/>
<polygon points="712.0,633.6 763.8,586.9 759.5,586.4 705.5,632.7" fill="#85869c" stroke="#0a0a0a" stroke-width="1" stroke-linejoin="round"/>
<path d="M711.6,640.6L764.1,596.6" fill="none" stroke="#0a0a0a" stroke-width="1" stroke-linejoin="round"/>
<path d="M631.3,619.0L688.2,627.0" fill="none" stroke="#0a0a0a" stroke-width="1" stroke-linejoin="round"/>
<path d="M631.3,621.0L688.2,629.0" fill="none" stroke="#333" stroke-width="1" stroke-linejoin="round"/>
<polygon points="762.6,566.6 763.3,580.1 918.3,432.3 976.4,375.0 977.0,369.5" fill="#83848f" stroke="#0a0a0a" stroke-width="1" stroke-linejoin="round"/>
<polygon points="761.4,561.2 762.6,566.6 977.0,369.5 977.3,366.5" fill="#7a7c9a" stroke="#0a0a0a" stroke-width="1" stroke-linejoin="round"/>
<polygon points="760.2,549.0 761.4,561.2 977.3,366.5 977.7,361.5" fill="#83848f" stroke="#0a0a0a" stroke-width="1" stroke-linejoin="round"/>
<polygon points="758.6,539.2 760.2,549.0 977.7,361.5 978.1,357.0" fill="#8688a6" stroke="#0a0a0a" stroke-width="1" stroke-linejoin="round"/>
<polygon points="759.0,530.3 758.6,539.2 978.1,357.0 978.5,353.0" fill="#9296b6" stroke="#0a0a0a" stroke-width="1" stroke-linejoin="round"/>
<path d="M798.8,501.8L978.3,355.0" fill="none" stroke="#15151c" stroke-width="0.9" stroke-dasharray="7 5"/>
<polygon points="753.3,522.5 759.0,530.3 978.5,353.0 889.0,416.4" fill="#7f7f8d" stroke="#0a0a0a" stroke-width="1" stroke-linejoin="round"/>
<polygon points="649.6,567.3 763.3,580.1 763.3,587.4 756.0,586.8 756.0,593.0 733.0,591.0 657.0,582.5 657.0,574.8 650.4,574.0" fill="#7c7c7c" stroke="#0a0a0a" stroke-width="1" stroke-linejoin="round"/>
<polygon points="661.9,593.5 717.4,599.6 717.4,608.2 661.9,601.2" fill="#3f4154" stroke="#0a0a0a" stroke-width="1" stroke-linejoin="round"/>
<polygon points="717.4,599.6 732.0,584.2 732.5,591.0 717.4,608.0" fill="#777785" stroke="#0a0a0a" stroke-width="1" stroke-linejoin="round"/>
<polygon points="661.9,593.5 679.1,579.2 732.0,584.2 717.4,599.6" fill="#8a8dab" stroke="#0a0a0a" stroke-width="1" stroke-linejoin="round"/>
<polygon points="649.2,566.0 663.0,556.0 762.6,566.6 763.3,580.1 649.2,567.5" fill="#7f7f8d" stroke="#0a0a0a" stroke-width="1" stroke-linejoin="round"/>
<polygon points="648.2,548.0 761.4,561.2 762.6,566.6 648.2,554.2" fill="#7a7a7a" stroke="#0a0a0a" stroke-width="1" stroke-linejoin="round"/>
<path d="M649.0,551.0L757.0,563.8" fill="none" stroke="#222" stroke-width="0.8" stroke-linejoin="round"/>
<polygon points="648.2,547.1 677.2,531.3 677.2,539.8 760.2,549.0 761.4,561.2 648.2,548.0" fill="#7f7f8d" stroke="#0a0a0a" stroke-width="1" stroke-linejoin="round"/>
<polygon points="677.2,531.3 758.1,539.2 760.2,549.0 677.2,539.8" fill="#7c7c7c" stroke="#0a0a0a" stroke-width="1" stroke-linejoin="round"/>
<polygon points="647.3,520.3 673.0,506.0 673.0,514.4 753.3,522.5 759.0,530.3 647.9,521.6" fill="#7f7f8d" stroke="#0a0a0a" stroke-width="1" stroke-linejoin="round"/>
<polygon points="647.9,521.6 759.0,530.3 758.1,539.2 647.3,528.4" fill="#d6d6da" stroke="#0a0a0a" stroke-width="1" stroke-linejoin="round"/>
<polygon points="671.1,492.2 831.3,401.4 888.6,403.5 752.5,500.7" fill="#7f7f8d" stroke="#0a0a0a" stroke-width="1" stroke-linejoin="round"/>
<polygon points="752.5,500.7 888.6,403.5 889.0,416.4 753.3,522.5" fill="#8385a3" stroke="#0a0a0a" stroke-width="1" stroke-linejoin="round"/>
<polygon points="671.1,492.2 752.5,500.7 753.3,522.5 673.0,514.4" fill="#7c7c7c" stroke="#0a0a0a" stroke-width="1" stroke-linejoin="round"/>
<polygon points="831.3,401.4 886.7,375.0 928.4,348.1 960.5,346.7 965.1,351.5 979.3,352.6 889.0,416.4 888.6,403.5" fill="#7f7f8d" stroke="#0a0a0a" stroke-width="1" stroke-linejoin="round"/>
<polygon points="886.7,375.0 928.4,348.1 960.5,346.7 925.6,375.7" fill="#7f7f8d" stroke="#0a0a0a" stroke-width="1" stroke-linejoin="round"/>
<polygon points="925.6,375.7 960.5,346.7 961.2,357.4 925.6,386.2" fill="#8385a3" stroke="#0a0a0a" stroke-width="1" stroke-linejoin="round"/>
<polygon points="886.7,375.0 925.6,375.7 925.6,386.2 887.9,385.1" fill="#7c7c7c" stroke="#0a0a0a" stroke-width="1" stroke-linejoin="round"/>
<polygon points="933.5,345.5 936.6,341.9 965.1,342.9 960.5,346.7" fill="#7f7f8d" stroke="#0a0a0a" stroke-width="1" stroke-linejoin="round"/>
<polygon points="960.5,346.7 965.1,342.9 965.1,352.5 961.0,357.1" fill="#8385a3" stroke="#0a0a0a" stroke-width="1" stroke-linejoin="round"/>
<polygon points="972.0,360.2 979.3,352.6 983.6,358.6 983.8,366.0 979.2,364.6 972.6,363.6" fill="#84859a" stroke="#0a0a0a" stroke-width="1.2" stroke-linejoin="round"/>
<path d="M972.6,363.6L979.2,364.6L983.6,358.6" fill="none" stroke="#0a0a0a" stroke-width="1.2" stroke-linejoin="round"/>
<polygon points="977.4,369.6 982.6,369.0 982.6,372.6 977.0,373.2" fill="#8e8e8e" stroke="#0a0a0a" stroke-width="1" stroke-linejoin="round"/>
<path d="M976.8,374.9L977.3,407.5" fill="none" stroke="#0a0a0a" stroke-width="1" stroke-linejoin="round"/>
<polygon points="977.2,375.4 982.0,376.2 978.2,397.0" fill="#8a8cab" stroke="#0a0a0a" stroke-width="0.9" stroke-linejoin="round"/>
<path d="M978,380L985.5,384M978,387L985.5,385M978.2,395L986,387.5" fill="none" stroke="#0a0a0a" stroke-width="0.9"/>
<path d="M981.5,385.5l5,-3.5l2.5,4z" fill="#8c8ea8" stroke="#050505" stroke-width="0.8"/>
<path d="M984.2,379.4l2.6,2.2l2.4,-2.4l2.6,1.6l-.8,2.8l3.4,-.8l-.6,2.4l-2.6,1.2l.4,2.4l-2.6,1.4l-1.6,-1.8" fill="none" stroke="#050505" stroke-width="1.9" stroke-linejoin="round"/>
<circle cx="991.5" cy="383.6" r="1.1" fill="#b8b8b8"/>
<path d="M547.4,650.3L651.1,670.1" fill="none" stroke="#000" stroke-width="1.5" stroke-linejoin="round"/>
<linearGradient id="gEdge1" gradientUnits="userSpaceOnUse" x1="639.2" y1="777.3" x2="508.5" y2="846.1"><stop offset="0" stop-color="#f09020"/><stop offset="1" stop-color="#3a2a20"/></linearGradient>
<linearGradient id="gEdge2" gradientUnits="userSpaceOnUse" x1="639.2" y1="777.3" x2="651.1" y2="670.1"><stop offset="0" stop-color="#f09020"/><stop offset="1" stop-color="#1a1410"/></linearGradient>
<path d="M508.5,846.1L639.2,777.3" fill="none" stroke="url(#gEdge1)" stroke-width="1.2" stroke-linejoin="round"/>
<path d="M639.2,777.3L651.1,670.1" fill="none" stroke="url(#gEdge2)" stroke-width="1.2" stroke-linejoin="round"/>
</g>
<path d="M464.9,755.2h3v3h-3zM507.0,844.6h3v3h-3zM649.6,668.6h3v3h-3zM545.9,648.8h3v3h-3zM580.0,614.9h3v3h-3zM710.5,632.1h3v3h-3zM704.4,722.3h3v3h-3zM768.3,656.0h3v3h-3zM762.3,585.4h3v3h-3zM709.9,647.5h3v3h-3zM686.7,625.5h3v3h-3zM669.6,490.7h3v3h-3zM751.0,499.2h3v3h-3zM671.5,512.9h3v3h-3zM751.8,521.0h3v3h-3zM645.8,518.8h3v3h-3zM645.8,526.9h3v3h-3zM757.5,528.8h3v3h-3zM756.6,537.7h3v3h-3zM646.7,545.6h3v3h-3zM646.7,552.7h3v3h-3zM759.9,559.7h3v3h-3zM761.1,565.1h3v3h-3zM647.7,564.5h3v3h-3zM761.8,578.6h3v3h-3zM660.4,592.0h3v3h-3zM715.9,598.1h3v3h-3zM677.6,578.2h3v3h-3zM730.5,582.7h3v3h-3zM829.8,399.9h3v3h-3zM887.1,402.0h3v3h-3zM887.5,414.9h3v3h-3zM885.2,373.5h3v3h-3zM924.1,374.2h3v3h-3zM926.9,346.6h3v3h-3zM959.0,345.2h3v3h-3zM935.1,340.4h3v3h-3zM963.6,341.4h3v3h-3zM977.8,351.1h3v3h-3zM981.9,357.2h3v3h-3zM981.9,365.3h3v3h-3zM975.3,373.4h3v3h-3zM975.8,406.0h3v3h-3zM916.8,430.8h3v3h-3zM852.2,545.1h3v3h-3zM862.0,541.2h3v3h-3zM858.8,554.9h3v3h-3z" fill="#000"/>
<circle cx="858.7" cy="383.2" r="2.6" fill="#0a0a0a"/>
<circle cx="858.7" cy="383.2" r="7" fill="none" stroke="#111" stroke-width="1" stroke-dasharray="2.5 2"/>
<circle cx="858.7" cy="383.2" r="11" fill="none" stroke="#111" stroke-width="1" stroke-dasharray="2.5 2"/>
<circle cx="1000.2" cy="354.6" r="9.8" fill="none" stroke="#fff" stroke-width="1.3"/>
<circle cx="1000.2" cy="354.6" r="9.8" fill="none" stroke="#e01010" stroke-width="1.3" stroke-dasharray="3.85 3.85"/>
<path d="M980.4,354.6H994.6M1005.6,354.6H1020M1000.2,335.3V350M1000.2,359.7V374.4" fill="none" stroke="#000" stroke-width="1"/>
<path d="M638.2,763.2L634.2,718" fill="none" stroke="#1010e0" stroke-width="1.1"/>
<path d="M629.5,722L634,705.5L639,721.5z" fill="#1414ee"/>
<path d="M626,775L585,767.3" fill="none" stroke="#e01010" stroke-width="1.1"/>
<path d="M568,764.2L586,761L585.2,772.2z" fill="#ee1414"/>
<path d="M630.5,788.2L602,819" fill="none" stroke="#10c010" stroke-width="1.1"/>
<path d="M588,835L597,817.5L606.5,825.5z" fill="#14e014"/>
<circle cx="640.3" cy="777.6" r="14.5" fill="none" stroke="#fff" stroke-width="1.2"/>
<rect x="638.2" y="775.8" width="2.6" height="2.6" fill="#fff"/>
<circle cx="638.4" cy="663.7" r="3" fill="#f0a050" stroke="#5a3000" stroke-width="0.8"/>
<path d="M179.2,843.3L186.3,836.7" fill="none" stroke="#10d810" stroke-width="2"/>
<text x="180.5" y="843.5" font-size="9" fill="#20e020">y</text>
<path d="M161.2,835.7L184.5,837.6" fill="none" stroke="#e00808" stroke-width="2"/>
<path d="M185,837.4V814" fill="none" stroke="#0808ee" stroke-width="2.2"/>
<text x="187.6" y="811.7" font-size="10" fill="#2020f0">z</text>
<text x="163.6" y="833.8" font-size="10" fill="#d01010">x</text>
<text x="229.6" y="853.7" font-size="11" fill="#fff" textLength="95.3" lengthAdjust="spacingAndGlyphs">(142) RMS TITANIC</text>
</g>
<g id="view3d-header" >
<rect x="0" y="864" width="1649" height="26" fill="#6a6a6a"/>
<rect x="0" y="864" width="1649" height="1" fill="#7c7c7c"/>
<rect x="0" y="890" width="1649" height="1" fill="#000"/>
<clipPath id="cc4"><rect x="0" y="878" width="12" height="12"/></clipPath><g clip-path="url(#cc4)">
<path d="M-1,877L13,891" fill="none" stroke="#1c1c1c" stroke-width="1.15"/>
<path d="M-1,878.6L11.4,891" fill="none" stroke="#b4b4b4" stroke-width="1.1"/>
<path d="M-1,880.2L9.8,891" fill="none" stroke="#1c1c1c" stroke-width="1.15"/>
<path d="M-1,881.8000000000001L8.2,891" fill="none" stroke="#b4b4b4" stroke-width="1.1"/>
<path d="M-1,883.4L6.6,891" fill="none" stroke="#1c1c1c" stroke-width="1.15"/>
<path d="M-1,885.0L5.0,891" fill="none" stroke="#b4b4b4" stroke-width="1.1"/>
<path d="M-1,886.6L3.4000000000000004,891" fill="none" stroke="#1c1c1c" stroke-width="1.15"/>
<path d="M-1,888.2L1.8000000000000007,891" fill="none" stroke="#b4b4b4" stroke-width="1.1"/>
</g>
<path d="M13.5,868.5H34.5A4,4 0 0 1 38.5,872.5V883.5A4,4 0 0 1 34.5,887.5H13.5A4,4 0 0 1 9.5,883.5V872.5A4,4 0 0 1 13.5,868.5Z" fill="none" stroke="rgba(255,255,255,0.09)" stroke-width="1"/>
<path d="M13.5,867.5H34.5A4,4 0 0 1 38.5,871.5V882.5A4,4 0 0 1 34.5,886.5H13.5A4,4 0 0 1 9.5,882.5V871.5A4,4 0 0 1 13.5,867.5Z" fill="url(#gMenu)" stroke="#1a1a1a" stroke-width="1"/>
<path d="M14.5,872l7,-1.6l6,1.8v7.6l-6.4,4l-6.6,-4z" fill="#e4e4e4" stroke="#111" stroke-width="1" stroke-linejoin="round"/>
<path d="M21.1,874.4l6.4,-2.2v7.6l-6.4,4z" fill="url(#gCubeR)"/>
<path d="M14.5,872l6.6,2.4v9.4l-6.6,-4z" fill="#f6f6f6"/>
<path d="M14.5,872l6.6,2.4l6.4,-2.2M21.1,874.4v9.4" fill="none" stroke="#fff" stroke-width="0.7"/>
<path d="M14.5,872l7,-1.6l6,1.8v7.6l-6.4,4l-6.6,-4z" fill="none" stroke="#111" stroke-width="1" stroke-linejoin="round"/>
<path d="M29.5,875.5L32.5,870.5L35.5,875.5Z M29.5,878.5L32.5,883.5L35.5,878.5Z" fill="#999"/>
<text x="51.2" y="882.2" font-size="11" fill="#000" textLength="24.5" lengthAdjust="spacingAndGlyphs">View</text>
<text x="96.5" y="882.2" font-size="11" fill="#000" textLength="30.5" lengthAdjust="spacingAndGlyphs">Select</text>
<text x="147" y="882.2" font-size="11" fill="#000" textLength="19.5" lengthAdjust="spacingAndGlyphs">Add</text>
<text x="186" y="882.2" font-size="11" fill="#000" textLength="26.5" lengthAdjust="spacingAndGlyphs">Mesh</text>
<path d="M229.5,868.5H319.5A4,4 0 0 1 323.5,872.5V883.5A4,4 0 0 1 319.5,887.5H229.5A4,4 0 0 1 225.5,883.5V872.5A4,4 0 0 1 229.5,868.5Z" fill="none" stroke="rgba(255,255,255,0.09)" stroke-width="1"/>
<path d="M229.5,867.5H319.5A4,4 0 0 1 323.5,871.5V882.5A4,4 0 0 1 319.5,886.5H229.5A4,4 0 0 1 225.5,882.5V871.5A4,4 0 0 1 229.5,867.5Z" fill="url(#gMenu)" stroke="#1a1a1a" stroke-width="1"/>
<path d="M232,873l5.5,-2l5.5,2.2v6.6l-5.5,3.2l-5.5,-2.6z" fill="#b4b4b4" stroke="#3a3a3a" stroke-width="0.8" stroke-linejoin="round"/>
<path d="M237.5,875.4l5.5,-2.2v6.6l-5.5,3.2z" fill="#7a7a7a"/>
<path d="M232,873l5.5,2.4v7.6" fill="none" stroke="#e0e0e0" stroke-width="0.7"/>
<rect x="230.3" y="871.0999999999999" width="3.4" height="3.4" fill="#fff" stroke="#3a1c00" stroke-width="1.6"/>
<rect x="230.5" y="871.3" width="3" height="3" fill="#fff" stroke="#f08c1e" stroke-width="1"/>
<rect x="236.3" y="873.3" width="3.4" height="3.4" fill="#fff" stroke="#3a1c00" stroke-width="1.6"/>
<rect x="236.5" y="873.5" width="3" height="3" fill="#fff" stroke="#f08c1e" stroke-width="1"/>
<rect x="230.3" y="879.0999999999999" width="3.4" height="3.4" fill="#fff" stroke="#3a1c00" stroke-width="1.6"/>
<rect x="230.5" y="879.3" width="3" height="3" fill="#fff" stroke="#f08c1e" stroke-width="1"/>
<rect x="236.3" y="881.3" width="3.4" height="3.4" fill="#fff" stroke="#3a1c00" stroke-width="1.6"/>
<rect x="236.5" y="881.5" width="3" height="3" fill="#fff" stroke="#f08c1e" stroke-width="1"/>
<text x="249" y="882.2" font-size="11" fill="#fff" textLength="49.5" lengthAdjust="spacingAndGlyphs">Edit Mode</text>
<path d="M314.5,875.5L317.5,870.5L320.5,875.5Z M314.5,878.5L317.5,883.5L320.5,878.5Z" fill="#999"/>
<path d="M333.5,868.5H359.5A4,4 0 0 1 363.5,872.5V883.5A4,4 0 0 1 359.5,887.5H333.5A4,4 0 0 1 329.5,883.5V872.5A4,4 0 0 1 333.5,868.5Z" fill="none" stroke="rgba(255,255,255,0.09)" stroke-width="1"/>
<path d="M333.5,867.5H359.5A4,4 0 0 1 363.5,871.5V882.5A4,4 0 0 1 359.5,886.5H333.5A4,4 0 0 1 329.5,882.5V871.5A4,4 0 0 1 333.5,867.5Z" fill="url(#gMenu)" stroke="#1a1a1a" stroke-width="1"/>
<circle cx="341" cy="877" r="6.2" fill="url(#gBall2)" stroke="#1a1a1a" stroke-width="0.8"/>
<path d="M354.5,875.5L357.5,870.5L360.5,875.5Z M354.5,878.5L357.5,883.5L360.5,878.5Z" fill="#999"/>
<path d="M373.5,868.5H399.5A4,4 0 0 1 403.5,872.5V883.5A4,4 0 0 1 399.5,887.5H373.5A4,4 0 0 1 369.5,883.5V872.5A4,4 0 0 1 373.5,868.5Z" fill="none" stroke="rgba(255,255,255,0.09)" stroke-width="1"/>
<path d="M373.5,867.5H399.5A4,4 0 0 1 403.5,871.5V882.5A4,4 0 0 1 399.5,886.5H373.5A4,4 0 0 1 369.5,882.5V871.5A4,4 0 0 1 373.5,867.5Z" fill="url(#gMenu)" stroke="#1a1a1a" stroke-width="1"/>
<circle cx="377.8" cy="874" r="4.2" fill="url(#gBall2)" stroke="#1a1a1a" stroke-width="0.9"/>
<circle cx="383.2" cy="880" r="4.2" fill="url(#gBall2)" stroke="#1a1a1a" stroke-width="0.9"/>
<rect x="378.6" y="875.2" width="3.6" height="3.6" fill="#fff" stroke="#1c50d8" stroke-width="1.3"/>
<path d="M394.5,875.5L397.5,870.5L400.5,875.5Z M394.5,878.5L397.5,883.5L400.5,878.5Z" fill="#999"/>
<line x1="413" y1="887.5" x2="429" y2="887.5" stroke="rgba(255,255,255,0.09)" stroke-width="1" />
<path d="M413.5,867.5H428.5V886.5H413.5A4,4 0 0 1 409.5,882.5V871.5A4,4 0 0 1 413.5,867.5Z" fill="url(#gMenu)" stroke="#1a1a1a" stroke-width="1"/>
<path d="M419.3,879.2L419.3,870" fill="none" stroke="#1c3c90" stroke-width="3.4" stroke-linecap="round"/>
<path d="M419.3,879.2L413,883.4" fill="none" stroke="#7a1010" stroke-width="3.4" stroke-linecap="round"/>
<path d="M419.3,879.2L425.6,883.4" fill="none" stroke="#0c6a0c" stroke-width="3.4" stroke-linecap="round"/>
<path d="M419.3,879.2L419.3,870" fill="none" stroke="#5a96f4" stroke-width="2" stroke-linecap="round"/>
<path d="M419.3,879.2L413,883.4" fill="none" stroke="#f04040" stroke-width="2" stroke-linecap="round"/>
<path d="M419.3,879.2L425.6,883.4" fill="none" stroke="#40d840" stroke-width="2" stroke-linecap="round"/>
<path d="M418.90000000000003,877.2V870.4" fill="none" stroke="rgba(255,255,255,0.75)" stroke-width="0.8"/>
<circle cx="413.2" cy="883" r="0.9" fill="rgba(255,255,255,0.8)"/>
<circle cx="425.4" cy="883" r="0.9" fill="rgba(255,255,255,0.8)"/>
<line x1="428" y1="887.5" x2="449" y2="887.5" stroke="rgba(255,255,255,0.09)" stroke-width="1" />
<path d="M428.5,867.5H448.5V886.5H428.5V867.5Z" fill="url(#gSel)" stroke="#1a1a1a" stroke-width="1"/>
<path d="M432.6,882.6L440,875.2l-2.4,-2.4l7.6,-2l-2,7.6l-2.4,-2.4L433.4,883.4z" fill="#a8c6ff" stroke="#27427e" stroke-width="1" stroke-linejoin="round"/>
<line x1="448" y1="887.5" x2="469" y2="887.5" stroke="rgba(255,255,255,0.09)" stroke-width="1" />
<path d="M448.5,867.5H468.5V886.5H448.5V867.5Z" fill="url(#gMenu)" stroke="#1a1a1a" stroke-width="1"/>
<path d="M454,883C454,877 457.5,872.4 464.6,871.6" fill="none" stroke="#26354e" stroke-width="3.6" stroke-linecap="round"/>
<path d="M454,883C454,877 457.5,872.4 464.6,871.6" fill="none" stroke="#4c6c9e" stroke-width="2.2" stroke-linecap="round"/>
<line x1="468" y1="887.5" x2="489" y2="887.5" stroke="rgba(255,255,255,0.09)" stroke-width="1" />
<path d="M468.5,867.5H488.5V886.5H468.5V867.5Z" fill="url(#gMenu)" stroke="#1a1a1a" stroke-width="1"/>
<path d="M473.4,882.8L480,876.2" fill="none" stroke="#26354e" stroke-width="3.4" stroke-linecap="round"/>
<rect x="479" y="871.2" width="6" height="6" fill="#4c6c9e" stroke="#26354e" stroke-width="1"/>
<path d="M473.4,882.8L480,876.2" fill="none" stroke="#4c6c9e" stroke-width="2" stroke-linecap="round"/>
<line x1="488" y1="887.5" x2="557" y2="887.5" stroke="rgba(255,255,255,0.09)" stroke-width="1" />
<path d="M488.5,867.5H556.5A4,4 0 0 1 560.5,871.5V882.5A4,4 0 0 1 556.5,886.5H488.5V867.5Z" fill="url(#gMenu)" stroke="#1a1a1a" stroke-width="1"/>
<text x="496" y="882.2" font-size="11" fill="#fff" textLength="32" lengthAdjust="spacingAndGlyphs">Global</text>
<path d="M551.5,875.5L554.5,870.5L557.5,875.5Z M551.5,878.5L554.5,883.5L557.5,878.5Z" fill="#999"/>
<line x1="571" y1="887.5" x2="587" y2="887.5" stroke="rgba(255,255,255,0.09)" stroke-width="1" />
<path d="M571.5,867.5H586.5V886.5H571.5A4,4 0 0 1 567.5,882.5V871.5A4,4 0 0 1 571.5,867.5Z" fill="#646464" stroke="#1a1a1a" stroke-width="1"/>
<path d="M571.5,873.6l5.7,-2.6l5.5,2.6l-5.5,2.6z" fill="#c4c4c4"/>
<path d="M571.5,873.6l5.7,2.6v7.2l-5.7,-3z" fill="#b0b0b0"/>
<path d="M582.7,873.6l-5.5,2.6v7.2l5.5,-3z" fill="#8c8c8c"/>
<path d="M571.5,873.6l5.7,-2.6l5.5,2.6v6.8l-5.5,3l-5.7,-3z" fill="none" stroke="#2a2a2a" stroke-width="0.8" stroke-linejoin="round"/>
<circle cx="571.6" cy="873.2" r="1.8" fill="#f8a848" stroke="#4a2400" stroke-width="0.9"/>
<line x1="586" y1="887.5" x2="607" y2="887.5" stroke="rgba(255,255,255,0.09)" stroke-width="1" />
<path d="M586.5,867.5H606.5V886.5H586.5V867.5Z" fill="#999999" stroke="#1a1a1a" stroke-width="1"/>
<path d="M591.0,873.6l5.7,-2.6l5.5,2.6l-5.5,2.6z" fill="#b8b8b8"/>
<path d="M591.0,873.6l5.7,2.6v7.2l-5.7,-3z" fill="#aeaeae"/>
<path d="M602.2,873.6l-5.5,2.6v7.2l5.5,-3z" fill="#909090"/>
<path d="M591.0,873.6l5.7,-2.6l5.5,2.6v6.8l-5.5,3l-5.7,-3z" fill="none" stroke="rgba(60,60,60,0.55)" stroke-width="0.8" stroke-linejoin="round"/>
<rect x="590.5" y="873.4" width="1.8" height="7.4" fill="#f4b880" stroke="#a06a30" stroke-width="0.5"/>
<line x1="606" y1="887.5" x2="622" y2="887.5" stroke="rgba(255,255,255,0.09)" stroke-width="1" />
<path d="M606.5,867.5H621.5A4,4 0 0 1 625.5,871.5V882.5A4,4 0 0 1 621.5,886.5H606.5V867.5Z" fill="#999999" stroke="#1a1a1a" stroke-width="1"/>
<path d="M610.5,873.6l5.7,-2.6l5.5,2.6l-5.5,2.6z" fill="#b8b8b8"/>
<path d="M610.5,873.6l5.7,2.6v7.2l-5.7,-3z" fill="#aeaeae"/>
<path d="M621.7,873.6l-5.5,2.6v7.2l5.5,-3z" fill="#909090"/>
<path d="M610.5,873.6l5.7,-2.6l5.5,2.6v6.8l-5.5,3l-5.7,-3z" fill="none" stroke="rgba(60,60,60,0.55)" stroke-width="0.8" stroke-linejoin="round"/>
<path d="M610.6,873.8l5.4,2.5v7l-5.4,-2.9z" fill="#f0b47c" stroke="#a06a30" stroke-width="0.6"/>
<path d="M635.5,868.5H646.5A4,4 0 0 1 650.5,872.5V883.5A4,4 0 0 1 646.5,887.5H635.5A4,4 0 0 1 631.5,883.5V872.5A4,4 0 0 1 635.5,868.5Z" fill="none" stroke="rgba(255,255,255,0.09)" stroke-width="1"/>
<path d="M635.5,867.5H646.5A4,4 0 0 1 650.5,871.5V882.5A4,4 0 0 1 646.5,886.5H635.5A4,4 0 0 1 631.5,882.5V871.5A4,4 0 0 1 635.5,867.5Z" fill="#6c6c6c" stroke="#1a1a1a" stroke-width="1"/>
<path d="M639,872.5h8.5v8.5" fill="none" stroke="#2a2a2a" stroke-width="1" stroke-dasharray="1.5 1.5"/>
<circle cx="639" cy="872.5" r="1.3" fill="#f0f0f0" stroke="#2a2a2a" stroke-width="0.6"/>
<circle cx="647.5" cy="872.5" r="1.3" fill="#f0f0f0" stroke="#2a2a2a" stroke-width="0.6"/>
<circle cx="647.5" cy="881" r="1.3" fill="#f0f0f0" stroke="#2a2a2a" stroke-width="0.6"/>
<rect x="635.2" y="876.2" width="8" height="8" fill="#c4c4c4" stroke="#8a8a8a" stroke-width="0.6"/>
<rect x="633.6" y="874.4000000000001" width="3.2" height="3.2" fill="#fff" rx="0.8" stroke="#111" stroke-width="1"/>
<rect x="641.6" y="874.4000000000001" width="3.2" height="3.2" fill="#fff" rx="0.8" stroke="#111" stroke-width="1"/>
<rect x="633.6" y="882.4000000000001" width="3.2" height="3.2" fill="#fff" rx="0.8" stroke="#111" stroke-width="1"/>
<rect x="641.6" y="882.4000000000001" width="3.2" height="3.2" fill="#fff" rx="0.8" stroke="#111" stroke-width="1"/>
<path d="M660.5,868.5H686.5A4,4 0 0 1 690.5,872.5V883.5A4,4 0 0 1 686.5,887.5H660.5A4,4 0 0 1 656.5,883.5V872.5A4,4 0 0 1 660.5,868.5Z" fill="none" stroke="rgba(255,255,255,0.09)" stroke-width="1"/>
<path d="M660.5,867.5H686.5A4,4 0 0 1 690.5,871.5V882.5A4,4 0 0 1 686.5,886.5H660.5A4,4 0 0 1 656.5,882.5V871.5A4,4 0 0 1 660.5,867.5Z" fill="url(#gMenu)" stroke="#1a1a1a" stroke-width="1"/>
<circle cx="668" cy="877.6" r="4.8" fill="#5e5e5e" stroke="#7a7a7a" stroke-width="1.2"/>
<circle cx="668" cy="877.6" r="2" fill="#7c7c7c"/>
<path d="M681.5,875.5L684.5,870.5L687.5,875.5Z M681.5,878.5L684.5,883.5L687.5,878.5Z" fill="#999"/>
<line x1="700" y1="887.5" x2="716" y2="887.5" stroke="rgba(255,255,255,0.09)" stroke-width="1" />
<path d="M700.5,867.5H715.5V886.5H700.5A4,4 0 0 1 696.5,882.5V871.5A4,4 0 0 1 700.5,867.5Z" fill="#999999" stroke="#1a1a1a" stroke-width="1"/>
<g transform="translate(707,876.6) rotate(45)"><path d="M-5.2,6.5V-0.5a5.2,5.2 0 0 1 10.4,0V6.5H1.9V-0.3a1.9,1.9 0 0 0 -3.8,0V6.5z" fill="#c2c2c2" stroke="#6e6e6e" stroke-width="1" stroke-linejoin="round"/><path d="M-5.2,4.4h3.3M1.9,4.4h3.3" stroke="#6e6e6e" stroke-width="0.8" fill="none"/></g>
<line x1="715" y1="887.5" x2="751" y2="887.5" stroke="rgba(255,255,255,0.09)" stroke-width="1" />
<path d="M715.5,867.5H750.5V886.5H715.5V867.5Z" fill="url(#gMenu)" stroke="#1a1a1a" stroke-width="1"/>
<path d="M720.6,877.5h10.8" fill="none" stroke="#f0f0f0" stroke-width="1"/>
<path d="M720.4,874v7M731.6,874v7" fill="none" stroke="#f0f0f0" stroke-width="1.2"/>
<path d="M723,875.8v3.4M729,875.8v3.4" fill="none" stroke="#f0f0f0" stroke-width="0.9"/>
<path d="M726,873v9" fill="none" stroke="#1c3a98" stroke-width="3.6" stroke-linecap="round"/>
<path d="M726,873v9" fill="none" stroke="#5a8cf4" stroke-width="2.2" stroke-linecap="round"/>
<path d="M725.6,873.4v8" fill="none" stroke="#d0e0ff" stroke-width="0.7"/>
<path d="M740.5,875.5L743.5,870.5L746.5,875.5Z M740.5,878.5L743.5,883.5L746.5,878.5Z" fill="#999"/>
<line x1="750" y1="887.5" x2="766" y2="887.5" stroke="rgba(255,255,255,0.09)" stroke-width="1" />
<path d="M750.5,867.5H765.5A4,4 0 0 1 769.5,871.5V882.5A4,4 0 0 1 765.5,886.5H750.5V867.5Z" fill="#999999" stroke="#1a1a1a" stroke-width="1"/>
<path d="M756,877.5h11.5M756,882h11.5M759.5,874v10.5M764.2,872v12.5" fill="none" stroke="#3a3a3a" stroke-width="2.4"/>
<path d="M756,877.5h11.5M756,882h11.5M759.5,874v10.5M764.2,872v12.5" fill="none" stroke="#f6f6f6" stroke-width="1.1"/>
<circle cx="757.6" cy="874" r="3.9" fill="#fff" stroke="#1c3a98" stroke-width="1"/>
<circle cx="757.6" cy="874" r="2.2" fill="#3a6ae8"/>
<circle cx="757.6" cy="874" r="0.9" fill="#cfe0ff"/>
<path d="M780.5,868.5H791.5A4,4 0 0 1 795.5,872.5V883.5A4,4 0 0 1 791.5,887.5H780.5A4,4 0 0 1 776.5,883.5V872.5A4,4 0 0 1 780.5,868.5Z" fill="none" stroke="rgba(255,255,255,0.09)" stroke-width="1"/>
<path d="M780.5,867.5H791.5A4,4 0 0 1 795.5,871.5V882.5A4,4 0 0 1 791.5,886.5H780.5A4,4 0 0 1 776.5,882.5V871.5A4,4 0 0 1 780.5,867.5Z" fill="#999999" stroke="#1a1a1a" stroke-width="1"/>
<path d="M792,871.4L787.6,875.8M787.2,872.4v3.8h3.8" fill="none" stroke="#2a2a2a" stroke-width="3.4" stroke-linejoin="miter"/>
<path d="M780.2,883.2L784.6,878.8M781.2,878.4h3.8v3.8" fill="none" stroke="#2a2a2a" stroke-width="3.4" stroke-linejoin="miter"/>
<path d="M792,871.4L787.6,875.8M787.2,872.4v3.8h3.8" fill="none" stroke="#f6f6f6" stroke-width="1.7"/>
<path d="M780.2,883.2L784.6,878.8M781.2,878.4h3.8v3.8" fill="none" stroke="#f6f6f6" stroke-width="1.7"/>
<circle cx="792.4" cy="870.9" r="1.5" fill="#f8a040" stroke="#5a2c00" stroke-width="0.7"/>
<circle cx="779.8" cy="883.6" r="1.5" fill="#f8a040" stroke="#5a2c00" stroke-width="0.7"/>
<line x1="805" y1="887.5" x2="822" y2="887.5" stroke="rgba(255,255,255,0.09)" stroke-width="1" />
<path d="M805.5,867.5H821.5V886.5H805.5A4,4 0 0 1 801.5,882.5V871.5A4,4 0 0 1 805.5,867.5Z" fill="#999999" stroke="#1a1a1a" stroke-width="1"/>
<path d="M804.0,874.8h2.4l.8,-1.4h3.6l.8,1.4h5.4v9.2h-13z" fill="#dadada" stroke="#1a1a1a" stroke-width="1" stroke-linejoin="round"/>
<rect x="804.5" y="875.4" width="12" height="2.2" fill="#4a4a4a"/>
<rect x="805.1" y="875.8" width="1.6" height="1.2" fill="#e02020"/>
<circle cx="811.1" cy="879.8" r="3.5" fill="#cfcfcf" stroke="#1a1a1a" stroke-width="0.9"/>
<circle cx="811.1" cy="879.8" r="2.3" fill="#3a3a3a"/>
<circle cx="811.7" cy="880.4" r="1.2" fill="#b03030"/>
<circle cx="816" cy="872.2" r="2.6" fill="#f8e050" stroke="#a08000" stroke-width="0.6"/>
<path d="M816,870.2v4M814,872.2h4" fill="none" stroke="#fffce0" stroke-width="1.3"/>
<line x1="821" y1="887.5" x2="837" y2="887.5" stroke="rgba(255,255,255,0.09)" stroke-width="1" />
<path d="M821.5,867.5H836.5A4,4 0 0 1 840.5,871.5V882.5A4,4 0 0 1 836.5,886.5H821.5V867.5Z" fill="#999999" stroke="#1a1a1a" stroke-width="1"/>
<rect x="825.5" y="876.5" width="12" height="7.5" fill="#4c4c4c" rx="0.5" stroke="#1a1a1a" stroke-width="1"/>
<path d="M827,879h9M827,881.4h9" fill="none" stroke="#8a8a8a" stroke-width="0.9"/>
<g transform="rotate(-20 825.5 876)">
<rect x="825.5" y="873.2" width="12.5" height="2.8" fill="#1a1a1a" rx="0.4" stroke="#111" stroke-width="0.8"/>
<path d="M827.0,876l1.2,-2.8h1.8l-1.2,2.8z" fill="#f4f4f4"/>
<path d="M830.5,876l1.2,-2.8h1.8l-1.2,2.8z" fill="#f4f4f4"/>
<path d="M834.0,876l1.2,-2.8h1.8l-1.2,2.8z" fill="#f4f4f4"/>
</g>
<path d="M824.6,875l1.8,-.6l.6,2.4h-1.8z" fill="#7aa0e0" stroke="#1c2c50" stroke-width="0.6"/>
</g>
<g id="timeline" >
<rect x="0" y="891" width="1649" height="49" fill="#727272"/>
<rect x="0" y="891" width="363" height="48" fill="#575757"/>
<rect x="0" y="891" width="358" height="48" fill="#454545"/>
<rect x="1392" y="891" width="257" height="48" fill="#454545"/>
<path d="M7.5,891V939M48.5,891V939M89.5,891V939M131.5,891V939M172.5,891V939M214.5,891V939M255.5,891V939M296.5,891V939M338.5,891V939M379.5,891V939M420.5,891V939M462.5,891V939M503.5,891V939M544.5,891V939M586.5,891V939M627.5,891V939M668.5,891V939M710.5,891V939M751.5,891V939M793.5,891V939M834.5,891V939M875.5,891V939M917.5,891V939M958.5,891V939M999.5,891V939M1041.5,891V939M1082.5,891V939M1123.5,891V939M1165.5,891V939M1206.5,891V939M1247.5,891V939M1289.5,891V939M1330.5,891V939M1371.5,891V939M1413.5,891V939M1454.5,891V939M1496.5,891V939M1537.5,891V939M1578.5,891V939M1620.5,891V939" fill="none" stroke="rgba(0,0,0,0.10)" stroke-width="1"/>
<path d="M27.5,891V939M69.5,891V939M110.5,891V939M152.5,891V939M193.5,891V939M234.5,891V939M276.5,891V939M317.5,891V939M358.5,891V939M400.5,891V939M441.5,891V939M482.5,891V939M524.5,891V939M565.5,891V939M606.5,891V939M648.5,891V939M689.5,891V939M730.5,891V939M772.5,891V939M813.5,891V939M855.5,891V939M896.5,891V939M937.5,891V939M979.5,891V939M1020.5,891V939M1061.5,891V939M1103.5,891V939M1144.5,891V939M1185.5,891V939M1227.5,891V939M1268.5,891V939M1309.5,891V939M1351.5,891V939M1392.5,891V939M1434.5,891V939M1475.5,891V939M1516.5,891V939M1558.5,891V939M1599.5,891V939M1640.5,891V939" fill="none" stroke="rgba(0,0,0,0.17)" stroke-width="1"/>
<rect x="358" y="891" width="1.5" height="48" fill="#1c1c1c"/>
<rect x="945" y="891" width="3" height="48" fill="#5fd235"/>
<clipPath id="cc5"><rect x="1636" y="892" width="12" height="12"/></clipPath><g clip-path="url(#cc5)">
<path d="M1635,891L1649,905" fill="none" stroke="#1c1c1c" stroke-width="1.15"/>
<path d="M1636.6,891L1649,903.4" fill="none" stroke="#b4b4b4" stroke-width="1.1"/>
<path d="M1638.2,891L1649,901.8" fill="none" stroke="#1c1c1c" stroke-width="1.15"/>
<path d="M1639.8,891L1649,900.1999999999999" fill="none" stroke="#b4b4b4" stroke-width="1.1"/>
<path d="M1641.4,891L1649,898.6" fill="none" stroke="#1c1c1c" stroke-width="1.15"/>
<path d="M1643.0,891L1649,897.0" fill="none" stroke="#b4b4b4" stroke-width="1.1"/>
<path d="M1644.6,891L1649,895.4" fill="none" stroke="#1c1c1c" stroke-width="1.15"/>
<path d="M1646.1999999999998,891L1649,893.8" fill="none" stroke="#b4b4b4" stroke-width="1.1"/>
</g>
<rect x="0" y="940" width="1649" height="17" fill="#727272"/>
<path d="M10.5,940.5H1637.5A6,6 0 0 1 1643.5,946.5V946.5A6,6 0 0 1 1637.5,952.5H10.5A6,6 0 0 1 4.5,946.5V946.5A6,6 0 0 1 10.5,940.5Z" fill="url(#gTlScroll)" stroke="#3e3e3e" stroke-width="1"/>
<circle cx="9" cy="946.4" r="3.7" fill="#686868" stroke="#7a7a7a" stroke-width="0.6"/>
<circle cx="1638.6" cy="946.4" r="3.7" fill="#686868" stroke="#7a7a7a" stroke-width="0.6"/>
<text x="28.5" y="951" font-size="11" fill="#000" text-anchor="middle">-80</text>
<text x="69.6" y="951" font-size="11" fill="#000" text-anchor="middle">-70</text>
<text x="110.7" y="951" font-size="11" fill="#000" text-anchor="middle">-60</text>
<text x="151.8" y="951" font-size="11" fill="#000" text-anchor="middle">-50</text>
<text x="193.0" y="951" font-size="11" fill="#000" text-anchor="middle">-40</text>
<text x="234.1" y="951" font-size="11" fill="#000" text-anchor="middle">-30</text>
<text x="275.2" y="951" font-size="11" fill="#000" text-anchor="middle">-20</text>
<text x="316.3" y="951" font-size="11" fill="#000" text-anchor="middle">-10</text>
<text x="360.4" y="951" font-size="11" fill="#000" text-anchor="middle">0</text>
<text x="401.5" y="951" font-size="11" fill="#000" text-anchor="middle">10</text>
<text x="442.6" y="951" font-size="11" fill="#000" text-anchor="middle">20</text>
<text x="483.7" y="951" font-size="11" fill="#000" text-anchor="middle">30</text>
<text x="524.8" y="951" font-size="11" fill="#000" text-anchor="middle">40</text>
<text x="565.9" y="951" font-size="11" fill="#000" text-anchor="middle">50</text>
<text x="607.1" y="951" font-size="11" fill="#000" text-anchor="middle">60</text>
<text x="648.2" y="951" font-size="11" fill="#000" text-anchor="middle">70</text>
<text x="689.3" y="951" font-size="11" fill="#000" text-anchor="middle">80</text>
<text x="730.4" y="951" font-size="11" fill="#000" text-anchor="middle">90</text>
<text x="771.5" y="951" font-size="11" fill="#000" text-anchor="middle">100</text>
<text x="812.6" y="951" font-size="11" fill="#000" text-anchor="middle">110</text>
<text x="853.7" y="951" font-size="11" fill="#000" text-anchor="middle">120</text>
<text x="894.8" y="951" font-size="11" fill="#000" text-anchor="middle">130</text>
<text x="935.9" y="951" font-size="11" fill="#000" text-anchor="middle">140</text>
<text x="977.0" y="951" font-size="11" fill="#000" text-anchor="middle">150</text>
<text x="1018.2" y="951" font-size="11" fill="#000" text-anchor="middle">160</text>
<text x="1059.3" y="951" font-size="11" fill="#000" text-anchor="middle">170</text>
<text x="1100.4" y="951" font-size="11" fill="#000" text-anchor="middle">180</text>
<text x="1141.5" y="951" font-size="11" fill="#000" text-anchor="middle">190</text>
<text x="1182.6" y="951" font-size="11" fill="#000" text-anchor="middle">200</text>
<text x="1223.7" y="951" font-size="11" fill="#000" text-anchor="middle">210</text>
<text x="1264.8" y="951" font-size="11" fill="#000" text-anchor="middle">220</text>
<text x="1305.9" y="951" font-size="11" fill="#000" text-anchor="middle">230</text>
<text x="1347.0" y="951" font-size="11" fill="#000" text-anchor="middle">240</text>
<text x="1388.2" y="951" font-size="11" fill="#000" text-anchor="middle">250</text>
<text x="1429.3" y="951" font-size="11" fill="#000" text-anchor="middle">260</text>
<text x="1470.4" y="951" font-size="11" fill="#000" text-anchor="middle">270</text>
<text x="1511.5" y="951" font-size="11" fill="#000" text-anchor="middle">280</text>
<text x="1552.6" y="951" font-size="11" fill="#000" text-anchor="middle">290</text>
<text x="1593.7" y="951" font-size="11" fill="#000" text-anchor="middle">300</text>
</g>
<g id="timeline-header" >
<rect x="0" y="957" width="1649" height="26" fill="#6a6a6a"/>
<rect x="0" y="957" width="1649" height="1" fill="#7c7c7c"/>
<clipPath id="cc6"><rect x="0" y="971" width="12" height="12"/></clipPath><g clip-path="url(#cc6)">
<path d="M-1,970L13,984" fill="none" stroke="#1c1c1c" stroke-width="1.15"/>
<path d="M-1,971.6L11.4,984" fill="none" stroke="#b4b4b4" stroke-width="1.1"/>
<path d="M-1,973.2L9.8,984" fill="none" stroke="#1c1c1c" stroke-width="1.15"/>
<path d="M-1,974.8000000000001L8.2,984" fill="none" stroke="#b4b4b4" stroke-width="1.1"/>
<path d="M-1,976.4L6.6,984" fill="none" stroke="#1c1c1c" stroke-width="1.15"/>
<path d="M-1,978.0L5.0,984" fill="none" stroke="#b4b4b4" stroke-width="1.1"/>
<path d="M-1,979.6L3.4000000000000004,984" fill="none" stroke="#1c1c1c" stroke-width="1.15"/>
<path d="M-1,981.2L1.8000000000000007,984" fill="none" stroke="#b4b4b4" stroke-width="1.1"/>
</g>
<path d="M13.5,961.5H34.5A4,4 0 0 1 38.5,965.5V976.5A4,4 0 0 1 34.5,980.5H13.5A4,4 0 0 1 9.5,976.5V965.5A4,4 0 0 1 13.5,961.5Z" fill="none" stroke="rgba(255,255,255,0.09)" stroke-width="1"/>
<path d="M13.5,960.5H34.5A4,4 0 0 1 38.5,964.5V975.5A4,4 0 0 1 34.5,979.5H13.5A4,4 0 0 1 9.5,975.5V964.5A4,4 0 0 1 13.5,960.5Z" fill="url(#gMenu)" stroke="#1a1a1a" stroke-width="1"/>
<circle cx="21" cy="970" r="6.4" fill="#f2f2f2" stroke="#222" stroke-width="1"/>
<circle cx="21" cy="970" r="4.9" fill="none" stroke="#b8b8b8" stroke-width="0.9" stroke-dasharray="0.9 1.67"/>
<path d="M23.7,966L20.4,970.3L22.3,972.3" fill="none" stroke="#d81818" stroke-width="1.3" stroke-linejoin="round" stroke-linecap="round"/>
<path d="M29.5,968.5L32.5,963.5L35.5,968.5Z M29.5,971.5L32.5,976.5L35.5,971.5Z" fill="#999"/>
<text x="51.4" y="975.2" font-size="11" fill="#000" textLength="24.5" lengthAdjust="spacingAndGlyphs">View</text>
<text x="96.7" y="975.2" font-size="11" fill="#000" textLength="34.7" lengthAdjust="spacingAndGlyphs">Marker</text>
<text x="151.5" y="975.2" font-size="11" fill="#000" textLength="31.7" lengthAdjust="spacingAndGlyphs">Frame</text>
<text x="203.6" y="975.2" font-size="11" fill="#000" textLength="44.4" lengthAdjust="spacingAndGlyphs">Playback</text>
<line x1="265" y1="980.5" x2="281" y2="980.5" stroke="rgba(255,255,255,0.09)" stroke-width="1" />
<path d="M265.5,960.5H280.5V979.5H265.5A4,4 0 0 1 261.5,975.5V964.5A4,4 0 0 1 265.5,960.5Z" fill="#999999" stroke="#1a1a1a" stroke-width="1"/>
<circle cx="271" cy="970" r="6.4" fill="#f0f0f0" stroke="#222" stroke-width="1"/>
<path d="M271,970V964.6A5.4,5.4 0 0 1 276.4,970z" fill="#f09020"/>
<path d="M271,965.5V970h4" fill="none" stroke="#222" stroke-width="1.2"/>
<line x1="280" y1="980.5" x2="297" y2="980.5" stroke="rgba(255,255,255,0.09)" stroke-width="1" />
<path d="M280.5,960.5H296.5A4,4 0 0 1 300.5,964.5V975.5A4,4 0 0 1 296.5,979.5H280.5V960.5Z" fill="#999999" stroke="#1a1a1a" stroke-width="1"/>
<path d="M288,969.5V967.2a3,3 0 0 1 6,0V969.5" fill="none" stroke="#222" stroke-width="2.6"/>
<path d="M288,969.5V967.2a3,3 0 0 1 6,0V969.5" fill="none" stroke="#e8e8e8" stroke-width="1.2"/>
<rect x="286" y="969.5" width="10" height="7" fill="#e4e4e4" rx="1" stroke="#222" stroke-width="1"/>
<rect x="290.2" y="971.5" width="1.6" height="3" fill="#333"/>
<line x1="315" y1="980.5" x2="423" y2="980.5" stroke="rgba(255,255,255,0.09)" stroke-width="1" />
<path d="M315.5,960.5H422.5V979.5H315.5A9,9 0 0 1 306.5,970.5V969.5A9,9 0 0 1 315.5,960.5Z" fill="url(#gNum)" stroke="#252525" stroke-width="1"/>
<path d="M312,970l3.5,-3v6z" fill="#5a5a5a"/>
<path d="M417,970l-3.5,-3v6z" fill="#5a5a5a"/>
<text x="322.5" y="975.2" font-size="11" fill="#000">Start:</text>
<text x="407" y="975.2" font-size="11" fill="#000" text-anchor="end">1</text>
<line x1="422" y1="980.5" x2="525" y2="980.5" stroke="rgba(255,255,255,0.09)" stroke-width="1" />
<path d="M422.5,960.5H524.5A9,9 0 0 1 533.5,969.5V970.5A9,9 0 0 1 524.5,979.5H422.5V960.5Z" fill="url(#gNum)" stroke="#252525" stroke-width="1"/>
<path d="M428,970l3.5,-3v6z" fill="#5a5a5a"/>
<path d="M528,970l-3.5,-3v6z" fill="#5a5a5a"/>
<text x="437.5" y="975.2" font-size="11" fill="#000">End:</text>
<text x="518" y="975.2" font-size="11" fill="#000" text-anchor="end">250</text>
<path d="M549.5,961.5H619.5A9,9 0 0 1 628.5,970.5V971.5A9,9 0 0 1 619.5,980.5H549.5A9,9 0 0 1 540.5,971.5V970.5A9,9 0 0 1 549.5,961.5Z" fill="none" stroke="rgba(255,255,255,0.09)" stroke-width="1"/>
<path d="M549.5,960.5H619.5A9,9 0 0 1 628.5,969.5V970.5A9,9 0 0 1 619.5,979.5H549.5A9,9 0 0 1 540.5,970.5V969.5A9,9 0 0 1 549.5,960.5Z" fill="url(#gNum)" stroke="#252525" stroke-width="1"/>
<path d="M546,970l3.5,-3v6z" fill="#5a5a5a"/>
<path d="M623,970l-3.5,-3v6z" fill="#5a5a5a"/>
<text x="613" y="975.2" font-size="11" fill="#000" text-anchor="end">142</text>
<line x1="648" y1="980.5" x2="665" y2="980.5" stroke="rgba(255,255,255,0.09)" stroke-width="1" />
<path d="M648.5,960.5H664.5V979.5H648.5A4,4 0 0 1 644.5,975.5V964.5A4,4 0 0 1 648.5,960.5Z" fill="#999999" stroke="#1a1a1a" stroke-width="1"/>
<rect x="647.3" y="964.8" width="2.2" height="10.4" fill="#fff" stroke="#1a1a1a" stroke-width="0.9"/>
<path d="M655.5,964.6L650.1,970L655.5,975.4z" fill="#fff" stroke="#1a1a1a" stroke-width="1" stroke-linejoin="round"/>
<path d="M661.5,964.6L656.1,970L661.5,975.4z" fill="#fff" stroke="#1a1a1a" stroke-width="1" stroke-linejoin="round"/>
<line x1="664" y1="980.5" x2="685" y2="980.5" stroke="rgba(255,255,255,0.09)" stroke-width="1" />
<path d="M664.5,960.5H684.5V979.5H664.5V960.5Z" fill="#999999" stroke="#1a1a1a" stroke-width="1"/>
<path d="M674.5,964.6L668.1,970L674.5,975.4z" fill="#fff" stroke="#1a1a1a" stroke-width="1" stroke-linejoin="round"/>
<path d="M681.1,964.6L674.7,970L681.1,975.4z" fill="#fff" stroke="#1a1a1a" stroke-width="1" stroke-linejoin="round"/>
<line x1="684" y1="980.5" x2="705" y2="980.5" stroke="rgba(255,255,255,0.09)" stroke-width="1" />
<path d="M684.5,960.5H704.5V979.5H684.5V960.5Z" fill="#999999" stroke="#1a1a1a" stroke-width="1"/>
<path d="M700.0,963.4L688.7,970L700.0,976.6z" fill="#fff" stroke="#1a1a1a" stroke-width="1" stroke-linejoin="round"/>
<line x1="704" y1="980.5" x2="725" y2="980.5" stroke="rgba(255,255,255,0.09)" stroke-width="1" />
<path d="M704.5,960.5H724.5V979.5H704.5V960.5Z" fill="#999999" stroke="#1a1a1a" stroke-width="1"/>
<path d="M709.3,963.4L720.7,970L709.3,976.6z" fill="#fff" stroke="#1a1a1a" stroke-width="1" stroke-linejoin="round"/>
<line x1="724" y1="980.5" x2="745" y2="980.5" stroke="rgba(255,255,255,0.09)" stroke-width="1" />
<path d="M724.5,960.5H744.5V979.5H724.5V960.5Z" fill="#999999" stroke="#1a1a1a" stroke-width="1"/>
<path d="M727.9,964.6L734.3,970L727.9,975.4z" fill="#fff" stroke="#1a1a1a" stroke-width="1" stroke-linejoin="round"/>
<path d="M734.5,964.6L740.9,970L734.5,975.4z" fill="#fff" stroke="#1a1a1a" stroke-width="1" stroke-linejoin="round"/>
<line x1="744" y1="980.5" x2="760" y2="980.5" stroke="rgba(255,255,255,0.09)" stroke-width="1" />
<path d="M744.5,960.5H759.5A4,4 0 0 1 763.5,964.5V975.5A4,4 0 0 1 759.5,979.5H744.5V960.5Z" fill="#999999" stroke="#1a1a1a" stroke-width="1"/>
<path d="M747.5,964.6L752.9,970L747.5,975.4z" fill="#fff" stroke="#1a1a1a" stroke-width="1" stroke-linejoin="round"/>
<path d="M753.5,964.6L758.9,970L753.5,975.4z" fill="#fff" stroke="#1a1a1a" stroke-width="1" stroke-linejoin="round"/>
<rect x="759.5" y="964.8" width="2.2" height="10.4" fill="#fff" stroke="#1a1a1a" stroke-width="0.9"/>
<path d="M774.5,961.5H880.5A4,4 0 0 1 884.5,965.5V976.5A4,4 0 0 1 880.5,980.5H774.5A4,4 0 0 1 770.5,976.5V965.5A4,4 0 0 1 774.5,961.5Z" fill="none" stroke="rgba(255,255,255,0.09)" stroke-width="1"/>
<path d="M774.5,960.5H880.5A4,4 0 0 1 884.5,964.5V975.5A4,4 0 0 1 880.5,979.5H774.5A4,4 0 0 1 770.5,975.5V964.5A4,4 0 0 1 774.5,960.5Z" fill="url(#gMenu)" stroke="#1a1a1a" stroke-width="1"/>
<text x="778" y="975.2" font-size="11" fill="#fff" textLength="41" lengthAdjust="spacingAndGlyphs">No Sync</text>
<path d="M875.5,968.5L878.5,963.5L881.5,968.5Z M875.5,971.5L878.5,976.5L881.5,971.5Z" fill="#999"/>
<path d="M905.5,961.5H916.5A4,4 0 0 1 920.5,965.5V976.5A4,4 0 0 1 916.5,980.5H905.5A4,4 0 0 1 901.5,976.5V965.5A4,4 0 0 1 905.5,961.5Z" fill="none" stroke="rgba(255,255,255,0.09)" stroke-width="1"/>
<path d="M905.5,960.5H916.5A4,4 0 0 1 920.5,964.5V975.5A4,4 0 0 1 916.5,979.5H905.5A4,4 0 0 1 901.5,975.5V964.5A4,4 0 0 1 905.5,960.5Z" fill="#999999" stroke="#1a1a1a" stroke-width="1"/>
<circle cx="911" cy="970" r="5" fill="#e03010" stroke="#701000" stroke-width="1"/>
<circle cx="910" cy="968.6" r="1.6" fill="rgba(255,200,160,0.55)"/>
<path d="M930.5,961.5H956.5A4,4 0 0 1 960.5,965.5V976.5A4,4 0 0 1 956.5,980.5H930.5A4,4 0 0 1 926.5,976.5V965.5A4,4 0 0 1 930.5,961.5Z" fill="none" stroke="rgba(255,255,255,0.09)" stroke-width="1"/>
<path d="M930.5,960.5H956.5A4,4 0 0 1 960.5,964.5V975.5A4,4 0 0 1 956.5,979.5H930.5A4,4 0 0 1 926.5,975.5V964.5A4,4 0 0 1 930.5,960.5Z" fill="url(#gMenu)" stroke="#1a1a1a" stroke-width="1"/>
<path d="M938,965l5,5l-5,5l-5,-5z" fill="#f8a020" stroke="#5a2c00" stroke-width="1"/>
<path d="M951.5,968.5L954.5,963.5L957.5,968.5Z M951.5,971.5L954.5,976.5L957.5,971.5Z" fill="#999"/>
<line x1="970" y1="980.5" x2="1097" y2="980.5" stroke="rgba(255,255,255,0.09)" stroke-width="1" />
<path d="M970.5,960.5H1096.5V979.5H970.5A4,4 0 0 1 966.5,975.5V964.5A4,4 0 0 1 970.5,960.5Z" fill="url(#gText)" stroke="#1a1a1a" stroke-width="1"/>
<path d="M972.2,963.6v9M972.2,964.2h2.6M972.2,966.8h2" fill="none" stroke="#3a2a00" stroke-width="3.2" stroke-linecap="round"/>
<circle cx="972.4" cy="974.4" r="2.8" fill="#f4e08c" stroke="#3a2a00" stroke-width="1"/>
<path d="M972.2,963.6v9M972.2,964.2h2.6M972.2,966.8h2" fill="none" stroke="#f4e08c" stroke-width="1.5" stroke-linecap="round"/>
<circle cx="972.4" cy="974.8" r="1" fill="#7a6a20"/>
<path d="M983,968L978,973" fill="none" stroke="#1a1a1a" stroke-width="3.2" stroke-linecap="round"/>
<circle cx="977" cy="974" r="2.6" fill="#ececec" stroke="#1a1a1a" stroke-width="1"/>
<path d="M983,968L978,973" fill="none" stroke="#ececec" stroke-width="1.5" stroke-linecap="round"/>
<line x1="1096" y1="980.5" x2="1117" y2="980.5" stroke="rgba(255,255,255,0.09)" stroke-width="1" />
<path d="M1096.5,960.5H1116.5V979.5H1096.5V960.5Z" fill="#999999" stroke="#1a1a1a" stroke-width="1"/>
<path d="M1111.5,964.6L1104.9,971.4M1109.9,966.4l1.8,1.8" fill="none" stroke="#1a1a1a" stroke-width="3.4" stroke-linecap="round"/>
<circle cx="1103.1" cy="973.4" r="3.2" fill="#f0f0f0" stroke="#1a1a1a" stroke-width="1"/>
<path d="M1111.5,964.6L1104.9,971.4M1109.9,966.4l1.8,1.8" fill="none" stroke="#f0f0f0" stroke-width="1.6" stroke-linecap="round"/>
<circle cx="1102.9" cy="973.6" r="1.2" fill="#7a7a7a"/>
<line x1="1116" y1="980.5" x2="1133" y2="980.5" stroke="rgba(255,255,255,0.09)" stroke-width="1" />
<path d="M1116.5,960.5H1132.5A4,4 0 0 1 1136.5,964.5V975.5A4,4 0 0 1 1132.5,979.5H1116.5V960.5Z" fill="#999999" stroke="#1a1a1a" stroke-width="1"/>
<path d="M1131.5,964.6L1124.9,971.4M1129.9,966.4l1.8,1.8" fill="none" stroke="#1a1a1a" stroke-width="3.4" stroke-linecap="round"/>
<circle cx="1123.1" cy="973.4" r="3.2" fill="#f0f0f0" stroke="#1a1a1a" stroke-width="1"/>
<path d="M1131.5,964.6L1124.9,971.4M1129.9,966.4l1.8,1.8" fill="none" stroke="#f0f0f0" stroke-width="1.6" stroke-linecap="round"/>
<circle cx="1122.9" cy="973.6" r="1.2" fill="#7a7a7a"/>
<path d="M1121.1,964.6l10.8,10.8M1131.9,964.6l-10.8,10.8" fill="none" stroke="#e81c1c" stroke-width="1.5"/>
</g>
<g id="outliner" >
<rect x="1650" y="27" width="252" height="26" fill="#6a6a6a"/>
<rect x="1650" y="27" width="252" height="1" fill="#7c7c7c"/>
<rect x="1650" y="52" width="252" height="1" fill="#5c5c5c"/>
<path d="M1663.5,31.5H1684.5A4,4 0 0 1 1688.5,35.5V46.5A4,4 0 0 1 1684.5,50.5H1663.5A4,4 0 0 1 1659.5,46.5V35.5A4,4 0 0 1 1663.5,31.5Z" fill="none" stroke="rgba(255,255,255,0.09)" stroke-width="1"/>
<path d="M1663.5,30.5H1684.5A4,4 0 0 1 1688.5,34.5V45.5A4,4 0 0 1 1684.5,49.5H1663.5A4,4 0 0 1 1659.5,45.5V34.5A4,4 0 0 1 1663.5,30.5Z" fill="url(#gMenu)" stroke="#1a1a1a" stroke-width="1"/>
<path d="M1665.5,36v10.5h3M1665.5,40.5h3" fill="none" stroke="#a8c0ee" stroke-width="1"/>
<rect x="1663" y="33.5" width="7" height="3" fill="#f0a030" rx="0.5" stroke="#5a2c00" stroke-width="0.6"/>
<rect x="1664.2" y="34.4" width="4.6" height="1.2" fill="#fff"/>
<rect x="1670" y="39" width="6.5" height="3" fill="#f4f4f4" rx="0.5" stroke="#222" stroke-width="0.6"/>
<rect x="1670" y="45" width="6.5" height="3" fill="#f4f4f4" rx="0.5" stroke="#222" stroke-width="0.6"/>
<path d="M1679.5,38.5L1682.5,33.5L1685.5,38.5Z M1679.5,41.5L1682.5,46.5L1685.5,41.5Z" fill="#999"/>
<text x="1701.2" y="45.2" font-size="11" fill="#000" textLength="24.5" lengthAdjust="spacingAndGlyphs">View</text>
<text x="1746.2" y="45.2" font-size="11" fill="#000" textLength="34.5" lengthAdjust="spacingAndGlyphs">Search</text>
<path d="M1797.5,31.5H1918.5A4,4 0 0 1 1922.5,35.5V46.5A4,4 0 0 1 1918.5,50.5H1797.5A4,4 0 0 1 1793.5,46.5V35.5A4,4 0 0 1 1797.5,31.5Z" fill="none" stroke="rgba(255,255,255,0.09)" stroke-width="1"/>
<path d="M1797.5,30.5H1918.5A4,4 0 0 1 1922.5,34.5V45.5A4,4 0 0 1 1918.5,49.5H1797.5A4,4 0 0 1 1793.5,45.5V34.5A4,4 0 0 1 1797.5,30.5Z" fill="url(#gMenu)" stroke="#1a1a1a" stroke-width="1"/>
<text x="1801" y="45.2" font-size="11" fill="#fff" textLength="51.5" lengthAdjust="spacingAndGlyphs">All Scenes</text>
<clipPath id="cc7"><rect x="1890" y="28" width="12" height="12"/></clipPath><g clip-path="url(#cc7)">
<path d="M1889,27L1903,41" fill="none" stroke="#1c1c1c" stroke-width="1.15"/>
<path d="M1890.6,27L1903,39.4" fill="none" stroke="#b4b4b4" stroke-width="1.1"/>
<path d="M1892.2,27L1903,37.8" fill="none" stroke="#1c1c1c" stroke-width="1.15"/>
<path d="M1893.8,27L1903,36.199999999999996" fill="none" stroke="#b4b4b4" stroke-width="1.1"/>
<path d="M1895.4,27L1903,34.6" fill="none" stroke="#1c1c1c" stroke-width="1.15"/>
<path d="M1897.0,27L1903,33.0" fill="none" stroke="#b4b4b4" stroke-width="1.1"/>
<path d="M1898.6,27L1903,31.4" fill="none" stroke="#1c1c1c" stroke-width="1.15"/>
<path d="M1900.1999999999998,27L1903,29.799999999999997" fill="none" stroke="#b4b4b4" stroke-width="1.1"/>
</g>
<rect x="1650" y="53" width="252" height="121" fill="#727272"/>
<rect x="1650" y="53" width="252" height="1" fill="#808080"/>
<rect x="1650" y="73" width="234" height="20" fill="#787878"/>
<rect x="1650" y="113" width="234" height="20" fill="#787878"/>
<rect x="1650" y="153" width="234" height="20" fill="#787878"/>
<rect x="1650" y="74" width="174" height="18" fill="#838a90"/>
<line x1="1825.5" y1="53" x2="1825.5" y2="173" stroke="#626262" stroke-width="1" />
<line x1="1845.5" y1="53" x2="1845.5" y2="173" stroke="#626262" stroke-width="1" />
<line x1="1865.5" y1="53" x2="1865.5" y2="173" stroke="#626262" stroke-width="1" />
<path d="M1662.5,62.5H1672M1678,71V162.5M1678,122.5H1693M1678,142.5H1695M1678,162.5H1692" fill="none" stroke="#2e2e2e" stroke-width="1"/>
<circle cx="1658.4" cy="62.5" r="4" fill="#fff" stroke="#111" stroke-width="1.1"/>
<path d="M1656.0,62.5h4.8" fill="none" stroke="#111" stroke-width="1.3"/>
<circle cx="1680" cy="62.5" r="9" fill="rgba(255,255,255,0.28)"/>
<path d="M1680.3,57.1v8.2a3.2,1.3 0 0 0 6.4,0v-8.2z" fill="url(#gCyl)" stroke="#0e2450" stroke-width="0.9"/>
<path d="M1680.3,57.1a3.2,1.3 0 0 1 6.4,0a3.2,1.3 0 0 1 -6.4,0z" fill="#cfe0fa" stroke="#0e2450" stroke-width="0.7"/>
<circle cx="1678.7" cy="65.7" r="3.7" fill="url(#gBall)" stroke="#111" stroke-width="1"/>
<circle cx="1675.7" cy="57.9" r="1.7" fill="#fffce0" stroke="#b8b428" stroke-width="1.1"/>
<text x="1691.7" y="68" font-size="11" fill="#000" textLength="30.5" lengthAdjust="spacingAndGlyphs">Scene</text>
<circle cx="1683.5" cy="82.6" r="4" fill="#fff" stroke="#111" stroke-width="1.1"/>
<path d="M1681.1,82.6h4.8M1683.5,80.19999999999999v4.8" fill="none" stroke="#111" stroke-width="1.3"/>
<rect x="1696.5" y="79.1" width="10" height="10" fill="#e8e2c8" stroke="#2a2a2a" stroke-width="0.9" transform="rotate(8 1701 83.6)"/>
<rect x="1693.5" y="76.1" width="10.5" height="10.5" fill="#f4f4f4" stroke="#1a1a1a" stroke-width="1"/>
<rect x="1695" y="77.6" width="7.5" height="7.5" fill="#5a82c8"/>
<rect x="1698.4" y="78.19999999999999" width="2.6" height="4.8" fill="#cfe0fa" stroke="#1c3c7a" stroke-width="0.5"/>
<circle cx="1697.4" cy="83.0" r="1.6" fill="#f4f4f4" stroke="#222" stroke-width="0.5"/>
<text x="1711.5" y="88" font-size="11" fill="#000" textLength="67.7" lengthAdjust="spacingAndGlyphs">RenderLayers</text>
<rect x="1789.2" y="77.5" width="1.5" height="11" fill="#333"/>
<circle cx="1808.4" cy="83.1" r="9" fill="rgba(255,255,255,0.28)"/>
<rect x="1803.9" y="79.1" width="10" height="10" fill="#e8e2c8" stroke="#2a2a2a" stroke-width="0.9" transform="rotate(8 1808.4 83.6)"/>
<rect x="1800.9" y="76.1" width="10.5" height="10.5" fill="#f4f4f4" stroke="#1a1a1a" stroke-width="1"/>
<rect x="1802.4" y="77.6" width="7.5" height="7.5" fill="#5a82c8"/>
<rect x="1805.8000000000002" y="78.19999999999999" width="2.6" height="4.8" fill="#cfe0fa" stroke="#1c3c7a" stroke-width="0.5"/>
<circle cx="1804.8000000000002" cy="83.0" r="1.6" fill="#f4f4f4" stroke="#222" stroke-width="0.5"/>
<circle cx="1699.9" cy="102.7" r="9" fill="rgba(200,200,255,0.30)"/>
<circle cx="1699.9" cy="102.7" r="6.2" fill="url(#gEarth)" stroke="#1a1a1a" stroke-width="1"/>
<path d="M1695.9,99.7q2,-2 4,-1.4q1,1.6 -0.6,2.6q-0.4,2 -2,2.4q-1.6,-1 -1.4,-3.6zM1701.4,103.2q2,-0.8 3,0.6q-0.2,2.4 -2,3.4q-1.2,-1.6 -1,-4z" fill="#5aa040" stroke="#2c5a20" stroke-width="0.4"/>
<text x="1711.5" y="108" font-size="11" fill="#000" textLength="29.5" lengthAdjust="spacingAndGlyphs">World</text>
<circle cx="1678.3" cy="122.6" r="4" fill="#fff" stroke="#111" stroke-width="1.1"/>
<path d="M1675.8999999999999,122.6h4.8M1678.3,120.19999999999999v4.8" fill="none" stroke="#111" stroke-width="1.3"/>
<circle cx="1697.3" cy="119.6" r="3" fill="#f09030" stroke="#5a2c00" stroke-width="0.9"/>
<circle cx="1703.3" cy="119.6" r="3" fill="#f09030" stroke="#5a2c00" stroke-width="0.9"/>
<circle cx="1697.3" cy="119.6" r="1" fill="#fff0d0"/>
<circle cx="1703.3" cy="119.6" r="1" fill="#fff0d0"/>
<path d="M1694.8,123h9.5v1.6l3.5,-1.6v6l-3.5,-1.6v1.6h-9.5z" fill="#f09030" stroke="#5a2c00" stroke-width="0.9" stroke-linejoin="round"/>
<text x="1711.4" y="128" font-size="11" fill="#000" textLength="38.3" lengthAdjust="spacingAndGlyphs">Camera</text>
<rect x="1760.2" y="117.3" width="1.5" height="11" fill="#333"/>
<circle cx="1778.6" cy="122.6" r="9.5" fill="rgba(255,255,255,0.30)"/>
<circle cx="1775.6" cy="119.19999999999999" r="3" fill="#b4b4b4" stroke="#8a8a8a" stroke-width="0.9"/>
<circle cx="1781.6" cy="119.19999999999999" r="3" fill="#b4b4b4" stroke="#8a8a8a" stroke-width="0.9"/>
<path d="M1773.1,122.6h9.5v1.6l3.5,-1.6v6l-3.5,-1.6v1.6h-9.5z" fill="#b4b4b4" stroke="#8a8a8a" stroke-width="0.9" stroke-linejoin="round"/>
<circle cx="1678.3" cy="142.6" r="4" fill="#fff" stroke="#111" stroke-width="1.1"/>
<path d="M1675.8999999999999,142.6h4.8M1678.3,140.2v4.8" fill="none" stroke="#111" stroke-width="1.3"/>
<path d="M1700.2,135.6a4.6,4.6 0 0 1 2.6,8.4v2h-5.2v-2a4.6,4.6 0 0 1 2.6,-8.4z" fill="#f8c880" stroke="#5a2c00" stroke-width="0.9"/>
<circle cx="1700.2" cy="139.9" r="2.2" fill="#fff4d8"/>
<rect x="1698.0" y="146.0" width="4.4" height="3.4" fill="#e07820" rx="0.8" stroke="#5a2c00" stroke-width="0.8"/>
<text x="1711.4" y="148" font-size="11" fill="#000" textLength="27.7" lengthAdjust="spacingAndGlyphs">Lamp</text>
<rect x="1749.3" y="137.3" width="1.5" height="11" fill="#333"/>
<circle cx="1767.8" cy="143" r="2.4" fill="#d8dca8" stroke="#6a6e40" stroke-width="0.7"/>
<path d="M1761.8,139.5v-2.5h2.5M1771.3,137h2.5v2.5M1773.8,146.5v2.5h-2.5M1764.3,149h-2.5v-2.5" fill="none" stroke="#c8cc98" stroke-width="1.2"/>
<path d="M1763.3,138.5l2.6,2.6M1772.3,138.5l-2.6,2.6M1763.3,147.5l2.6,-2.6M1772.3,147.5l-2.6,-2.6" fill="none" stroke="#c8cc98" stroke-width="1"/>
<circle cx="1678.3" cy="162.5" r="4" fill="#fff" stroke="#111" stroke-width="1.1"/>
<path d="M1675.8999999999999,162.5h4.8M1678.3,160.1v4.8" fill="none" stroke="#111" stroke-width="1.3"/>
<circle cx="1699.8" cy="162.6" r="9.5" fill="rgba(240,150,60,0.55)"/>
<path d="M1694.3,157.6h11l-5.5,10z" fill="none" stroke="#c86010" stroke-width="2.9000000000000004" stroke-linejoin="round"/>
<path d="M1694.3,157.6h11l-5.5,10z" fill="none" stroke="#fff" stroke-width="1.3" stroke-linejoin="round"/>
<circle cx="1694.3" cy="157.6" r="1.9" fill="#fff" stroke="#c86010" stroke-width="0.9"/>
<circle cx="1705.3" cy="157.6" r="1.9" fill="#fff" stroke="#c86010" stroke-width="0.9"/>
<circle cx="1699.8" cy="167.6" r="1.9" fill="#fff" stroke="#c86010" stroke-width="0.9"/>
<text x="1711.4" y="168" font-size="11" fill="#fff" textLength="64.3" lengthAdjust="spacingAndGlyphs">RMS TITANIC</text>
<rect x="1786.2" y="157.3" width="1.5" height="11" fill="#333"/>
<circle cx="1804.5" cy="162.8" r="9.5" fill="rgba(255,255,255,0.30)"/>
<path d="M1799.0,157.8h11l-5.5,10z" fill="none" stroke="#8a8a8a" stroke-width="2.6" stroke-linejoin="round"/>
<path d="M1799.0,157.8h11l-5.5,10z" fill="none" stroke="#a8a8a8" stroke-width="1" stroke-linejoin="round"/>
<circle cx="1799.0" cy="157.8" r="1.9" fill="#bdbdbd" stroke="#8a8a8a" stroke-width="0.9"/>
<circle cx="1810.0" cy="157.8" r="1.9" fill="#bdbdbd" stroke="#8a8a8a" stroke-width="0.9"/>
<circle cx="1804.5" cy="167.8" r="1.9" fill="#bdbdbd" stroke="#8a8a8a" stroke-width="0.9"/>
<path d="M1829.1000000000001,122.8q6.6,-7.4 13.2,0q-6.6,6.6 -13.2,0z" fill="#f8f8f8" stroke="#1a1a1a" stroke-width="0.9"/>
<circle cx="1835.7" cy="122.5" r="2.5" fill="#8c8c8c"/>
<circle cx="1836.0" cy="121.89999999999999" r="1.2" fill="#1a1a1a"/>
<path d="M1853.0,116.1v12l2.8,-2.6l2,4.4l2,-0.9l-2,-4.3h3.8z" fill="#f4f4f4" stroke="#111" stroke-width="1" stroke-linejoin="round"/>
<path d="M1869.1,119.89999999999999h2.4l.8,-1.4h3.6l.8,1.4h5.4v9.2h-13z" fill="#dadada" stroke="#1a1a1a" stroke-width="1" stroke-linejoin="round"/>
<rect x="1869.6" y="120.5" width="12" height="2.2" fill="#4a4a4a"/>
<rect x="1870.1999999999998" y="120.89999999999999" width="1.6" height="1.2" fill="#e02020"/>
<circle cx="1876.1999999999998" cy="124.89999999999999" r="3.5" fill="#cfcfcf" stroke="#1a1a1a" stroke-width="0.9"/>
<circle cx="1876.1999999999998" cy="124.89999999999999" r="2.3" fill="#3a3a3a"/>
<circle cx="1876.8" cy="125.5" r="1.2" fill="#b03030"/>
<path d="M1829.1000000000001,142.79999999999998q6.6,-7.4 13.2,0q-6.6,6.6 -13.2,0z" fill="#f8f8f8" stroke="#1a1a1a" stroke-width="0.9"/>
<circle cx="1835.7" cy="142.5" r="2.5" fill="#8c8c8c"/>
<circle cx="1836.0" cy="141.9" r="1.2" fill="#1a1a1a"/>
<path d="M1853.0,136.1v12l2.8,-2.6l2,4.4l2,-0.9l-2,-4.3h3.8z" fill="#f4f4f4" stroke="#111" stroke-width="1" stroke-linejoin="round"/>
<path d="M1869.1,139.9h2.4l.8,-1.4h3.6l.8,1.4h5.4v9.2h-13z" fill="#dadada" stroke="#1a1a1a" stroke-width="1" stroke-linejoin="round"/>
<rect x="1869.6" y="140.5" width="12" height="2.2" fill="#4a4a4a"/>
<rect x="1870.1999999999998" y="140.9" width="1.6" height="1.2" fill="#e02020"/>
<circle cx="1876.1999999999998" cy="144.9" r="3.5" fill="#cfcfcf" stroke="#1a1a1a" stroke-width="0.9"/>
<circle cx="1876.1999999999998" cy="144.9" r="2.3" fill="#3a3a3a"/>
<circle cx="1876.8" cy="145.5" r="1.2" fill="#b03030"/>
<path d="M1829.1000000000001,162.79999999999998q6.6,-7.4 13.2,0q-6.6,6.6 -13.2,0z" fill="#f8f8f8" stroke="#1a1a1a" stroke-width="0.9"/>
<circle cx="1835.7" cy="162.5" r="2.5" fill="#8c8c8c"/>
<circle cx="1836.0" cy="161.9" r="1.2" fill="#1a1a1a"/>
<path d="M1853.0,156.1v12l2.8,-2.6l2,4.4l2,-0.9l-2,-4.3h3.8z" fill="#f4f4f4" stroke="#111" stroke-width="1" stroke-linejoin="round"/>
<path d="M1869.1,159.9h2.4l.8,-1.4h3.6l.8,1.4h5.4v9.2h-13z" fill="#dadada" stroke="#1a1a1a" stroke-width="1" stroke-linejoin="round"/>
<rect x="1869.6" y="160.5" width="12" height="2.2" fill="#4a4a4a"/>
<rect x="1870.1999999999998" y="160.9" width="1.6" height="1.2" fill="#e02020"/>
<circle cx="1876.1999999999998" cy="164.9" r="3.5" fill="#cfcfcf" stroke="#1a1a1a" stroke-width="0.9"/>
<circle cx="1876.1999999999998" cy="164.9" r="2.3" fill="#3a3a3a"/>
<circle cx="1876.8" cy="165.5" r="1.2" fill="#b03030"/>
<path d="M1891.5,58.5H1891.5A6,6 0 0 1 1897.5,64.5V163.5A6,6 0 0 1 1891.5,169.5H1891.5A6,6 0 0 1 1885.5,163.5V64.5A6,6 0 0 1 1891.5,58.5Z" fill="url(#gScrollV)" stroke="#4a4a4a" stroke-width="1"/>
<rect x="1650" y="174" width="251" height="17" fill="#727272"/>
<path d="M1660.5,175.5H1873.5A6,6 0 0 1 1879.5,181.5V181.5A6,6 0 0 1 1873.5,187.5H1660.5A6,6 0 0 1 1654.5,181.5V181.5A6,6 0 0 1 1660.5,175.5Z" fill="url(#gScrollTrack)" stroke="#696969" stroke-width="1"/>
<path d="M1660.5,175.5H1824.5A6,6 0 0 1 1830.5,181.5V181.5A6,6 0 0 1 1824.5,187.5H1660.5A6,6 0 0 1 1654.5,181.5V181.5A6,6 0 0 1 1660.5,175.5Z" fill="url(#gScroll)" stroke="#4a4a4a" stroke-width="1"/>
<clipPath id="cc8"><rect x="1650" y="180" width="12" height="12"/></clipPath><g clip-path="url(#cc8)">
<path d="M1649,179L1663,193" fill="none" stroke="#1c1c1c" stroke-width="1.15"/>
<path d="M1649,180.6L1661.4,193" fill="none" stroke="#b4b4b4" stroke-width="1.1"/>
<path d="M1649,182.2L1659.8,193" fill="none" stroke="#1c1c1c" stroke-width="1.15"/>
<path d="M1649,183.79999999999998L1658.2,193" fill="none" stroke="#b4b4b4" stroke-width="1.1"/>
<path d="M1649,185.4L1656.6,193" fill="none" stroke="#1c1c1c" stroke-width="1.15"/>
<path d="M1649,187.0L1655.0,193" fill="none" stroke="#b4b4b4" stroke-width="1.1"/>
<path d="M1649,188.6L1653.4,193" fill="none" stroke="#1c1c1c" stroke-width="1.15"/>
<path d="M1649,190.2L1651.8000000000002,193" fill="none" stroke="#b4b4b4" stroke-width="1.1"/>
</g>
<rect x="1650" y="192" width="252" height="1" fill="#000"/>
</g>
<g id="properties" >
<rect x="1650" y="193" width="252" height="26" fill="#6a6a6a"/>
<rect x="1650" y="193" width="252" height="1" fill="#7c7c7c"/>
<path d="M1663.5,197.5H1684.5A4,4 0 0 1 1688.5,201.5V212.5A4,4 0 0 1 1684.5,216.5H1663.5A4,4 0 0 1 1659.5,212.5V201.5A4,4 0 0 1 1663.5,197.5Z" fill="none" stroke="rgba(255,255,255,0.09)" stroke-width="1"/>
<path d="M1663.5,196.5H1684.5A4,4 0 0 1 1688.5,200.5V211.5A4,4 0 0 1 1684.5,215.5H1663.5A4,4 0 0 1 1659.5,211.5V200.5A4,4 0 0 1 1663.5,196.5Z" fill="url(#gMenu)" stroke="#1a1a1a" stroke-width="1"/>
<rect x="1663.5" y="200.6" width="13.5" height="4.4" fill="#8a8a8a" rx="2.2" stroke="#1a1a1a" stroke-width="1"/>
<rect x="1671" y="201.2" width="5.4" height="3.2" fill="#f4f4f4" rx="1.6"/>
<rect x="1663.5" y="207.8" width="13.5" height="4.6" fill="#f4f4f4" rx="2.3" stroke="#1a1a1a" stroke-width="1"/>
<path d="M1665.2,210.1l2.2,-1.5v3zM1675.3,210.1l-2.2,-1.5v3z" fill="#1a1a1a"/>
<path d="M1679.5,204.5L1682.5,199.5L1685.5,204.5Z M1679.5,207.5L1682.5,212.5L1685.5,207.5Z" fill="#999"/>
<path d="M1700.5,196.5H1716.5V215.5H1700.5A4,4 0 0 1 1696.5,211.5V200.5A4,4 0 0 1 1700.5,196.5Z" fill="url(#gTabBtn)" stroke="#2a2a2a" stroke-width="1"/>
<g opacity="0.7">
<path d="M1700.0,203.3h2.4l.8,-1.4h3.6l.8,1.4h5.4v9.2h-13z" fill="#dadada" stroke="#1a1a1a" stroke-width="1" stroke-linejoin="round"/>
<rect x="1700.5" y="203.9" width="12" height="2.2" fill="#4a4a4a"/>
<rect x="1701.1" y="204.3" width="1.6" height="1.2" fill="#e02020"/>
<circle cx="1707.1" cy="208.3" r="3.5" fill="#cfcfcf" stroke="#1a1a1a" stroke-width="0.9"/>
<circle cx="1707.1" cy="208.3" r="2.3" fill="#3a3a3a"/>
<circle cx="1707.7" cy="208.9" r="1.2" fill="#b03030"/>
</g>
<path d="M1716.5,196.5H1736.5V215.5H1716.5V196.5Z" fill="url(#gTabBtn)" stroke="#2a2a2a" stroke-width="1"/>
<g opacity="0.7">
<rect x="1722.5" y="202.5" width="10" height="10" fill="#e8e2c8" stroke="#2a2a2a" stroke-width="0.9" transform="rotate(8 1727.0 207)"/>
<rect x="1719.5" y="199.5" width="10.5" height="10.5" fill="#f4f4f4" stroke="#1a1a1a" stroke-width="1"/>
<rect x="1721.0" y="201" width="7.5" height="7.5" fill="#5a82c8"/>
<rect x="1724.4" y="201.6" width="2.6" height="4.8" fill="#cfe0fa" stroke="#1c3c7a" stroke-width="0.5"/>
<circle cx="1723.4" cy="206.4" r="1.6" fill="#f4f4f4" stroke="#222" stroke-width="0.5"/>
</g>
<path d="M1736.5,196.5H1756.5V215.5H1736.5V196.5Z" fill="url(#gTabBtn)" stroke="#2a2a2a" stroke-width="1"/>
<g opacity="0.7">
<path d="M1747.3,201.6v8.2a3.2,1.3 0 0 0 6.4,0v-8.2z" fill="url(#gCyl)" stroke="#0e2450" stroke-width="0.9"/>
<path d="M1747.3,201.6a3.2,1.3 0 0 1 6.4,0a3.2,1.3 0 0 1 -6.4,0z" fill="#cfe0fa" stroke="#0e2450" stroke-width="0.7"/>
<circle cx="1745.7" cy="210.2" r="3.7" fill="url(#gBall)" stroke="#111" stroke-width="1"/>
<circle cx="1742.7" cy="202.4" r="1.7" fill="#fffce0" stroke="#b8b428" stroke-width="1.1"/>
</g>
<path d="M1756.5,196.5H1776.5V215.5H1756.5V196.5Z" fill="url(#gTabBtn)" stroke="#2a2a2a" stroke-width="1"/>
<g opacity="0.7">
<circle cx="1766.5" cy="206" r="6.2" fill="url(#gEarth)" stroke="#1a1a1a" stroke-width="1"/>
<path d="M1762.5,203q2,-2 4,-1.4q1,1.6 -0.6,2.6q-0.4,2 -2,2.4q-1.6,-1 -1.4,-3.6zM1768.0,206.5q2,-0.8 3,0.6q-0.2,2.4 -2,3.4q-1.2,-1.6 -1,-4z" fill="#5aa040" stroke="#2c5a20" stroke-width="0.4"/>
</g>
<path d="M1776.5,196.5H1796.5V215.5H1776.5V196.5Z" fill="url(#gTabBtn)" stroke="#2a2a2a" stroke-width="1"/>
<g opacity="0.7">
<path d="M1786.5,199.5l6,2.8v7l-6,3.4l-6,-3.4v-7z" fill="url(#gCube)" stroke="#5a2c00" stroke-width="1" stroke-linejoin="round"/>
<path d="M1786.5,205.2l6,-2.9v7l-6,3.4z" fill="#c07018"/>
<path d="M1780.5,202.3l6,2.9l6,-2.9M1786.5,205.2v7.4" fill="none" stroke="#fde0b0" stroke-width="0.8"/>
<path d="M1786.5,199.5l6,2.8v7l-6,3.4l-6,-3.4v-7z" fill="none" stroke="#5a2c00" stroke-width="1" stroke-linejoin="round"/>
</g>
<path d="M1796.5,196.5H1816.5V215.5H1796.5V196.5Z" fill="url(#gTabBtn)" stroke="#2a2a2a" stroke-width="1"/>
<g opacity="0.7">
<path d="M1805.5,207l-2.5,2.5a2,2 0 0 1 -3,-3l3,-3a2,2 0 0 1 3,0" fill="none" stroke="#222" stroke-width="4" stroke-linecap="round"/>
<path d="M1807.5,205l2.5,-2.5a2,2 0 0 1 3,3l-3,3a2,2 0 0 1 -3,0" fill="none" stroke="#222" stroke-width="4" stroke-linecap="round"/>
<path d="M1805.5,207l-2.5,2.5a2,2 0 0 1 -3,-3l3,-3a2,2 0 0 1 3,0" fill="none" stroke="#c8c8c8" stroke-width="2" stroke-linecap="round"/>
<path d="M1807.5,205l2.5,-2.5a2,2 0 0 1 3,3l-3,3a2,2 0 0 1 -3,0" fill="none" stroke="#c8c8c8" stroke-width="2" stroke-linecap="round"/>
</g>
<path d="M1816.5,196.5H1836.5V215.5H1816.5V196.5Z" fill="url(#gTabBtn)" stroke="#2a2a2a" stroke-width="1"/>
<g opacity="0.7">
<path d="M1821.0,211.5L1827.5,205" fill="none" stroke="#1c2c50" stroke-width="4" stroke-linecap="round"/>
<path d="M1828.0,200.5a3.8,3.8 0 1 0 4.5,4.5l-2.6,0.6l-2,-2z" fill="#7aa0e0" stroke="#1c2c50" stroke-width="1"/>
<path d="M1821.0,211.5L1827.5,205" fill="none" stroke="#7aa0e0" stroke-width="2.2" stroke-linecap="round"/>
</g>
<path d="M1836.5,196.5H1856.5V215.5H1836.5V196.5Z" fill="url(#gSel)" stroke="#2a2a2a" stroke-width="1"/>
<path d="M1841.0,201.0h11l-5.5,10z" fill="none" stroke="#111" stroke-width="2.9000000000000004" stroke-linejoin="round"/>
<path d="M1841.0,201.0h11l-5.5,10z" fill="none" stroke="#fff" stroke-width="1.3" stroke-linejoin="round"/>
<circle cx="1841.0" cy="201.0" r="1.9" fill="#fff" stroke="#111" stroke-width="0.9"/>
<circle cx="1852.0" cy="201.0" r="1.9" fill="#fff" stroke="#111" stroke-width="0.9"/>
<circle cx="1846.5" cy="211.0" r="1.9" fill="#fff" stroke="#111" stroke-width="0.9"/>
<path d="M1856.5,196.5H1876.5V215.5H1856.5V196.5Z" fill="url(#gTabBtn)" stroke="#2a2a2a" stroke-width="1"/>
<g opacity="0.7">
<circle cx="1866.5" cy="206" r="6" fill="#8a8a8a" stroke="#2a2a2a" stroke-width="0.9"/>
<path d="M1866.5,206V200A6,6 0 0 1 1872.5,206z" fill="#c8c8c8"/>
<path d="M1866.5,206H1872.5A6,6 0 0 1 1866.5,212z" fill="#d08070"/>
<path d="M1866.5,206V212A6,6 0 0 1 1860.5,206z" fill="#6a6a6a"/>
</g>
<path d="M1876.5,196.5H1896.5V215.5H1876.5V196.5Z" fill="url(#gTabBtn)" stroke="#2a2a2a" stroke-width="1"/>
<g opacity="0.7">
<rect x="1880.5" y="200" width="12" height="12" fill="#e8e0e0" stroke="#3a1010" stroke-width="0.8"/>
<rect x="1880.5" y="200" width="3" height="3" fill="#a03030"/>
<rect x="1880.5" y="206" width="3" height="3" fill="#a03030"/>
<rect x="1883.5" y="203" width="3" height="3" fill="#a03030"/>
<rect x="1883.5" y="209" width="3" height="3" fill="#a03030"/>
<rect x="1886.5" y="200" width="3" height="3" fill="#a03030"/>
<rect x="1886.5" y="206" width="3" height="3" fill="#a03030"/>
<rect x="1889.5" y="203" width="3" height="3" fill="#a03030"/>
<rect x="1889.5" y="209" width="3" height="3" fill="#a03030"/>
</g>
<path d="M1896.5,196.5H1916.5V215.5H1896.5V196.5Z" fill="url(#gTabBtn)" stroke="#2a2a2a" stroke-width="1"/>
<g opacity="0.7">
<path d="M1901.5,206h2M1901.5,202h1M1901.5,210h1" fill="none" stroke="#eee" stroke-width="1.4"/>
</g>
<clipPath id="cc9"><rect x="1890" y="194" width="12" height="12"/></clipPath><g clip-path="url(#cc9)">
<path d="M1889,193L1903,207" fill="none" stroke="#1c1c1c" stroke-width="1.15"/>
<path d="M1890.6,193L1903,205.4" fill="none" stroke="#b4b4b4" stroke-width="1.1"/>
<path d="M1892.2,193L1903,203.8" fill="none" stroke="#1c1c1c" stroke-width="1.15"/>
<path d="M1893.8,193L1903,202.20000000000002" fill="none" stroke="#b4b4b4" stroke-width="1.1"/>
<path d="M1895.4,193L1903,200.6" fill="none" stroke="#1c1c1c" stroke-width="1.15"/>
<path d="M1897.0,193L1903,199.0" fill="none" stroke="#b4b4b4" stroke-width="1.1"/>
<path d="M1898.6,193L1903,197.4" fill="none" stroke="#1c1c1c" stroke-width="1.15"/>
<path d="M1900.1999999999998,193L1903,195.8" fill="none" stroke="#b4b4b4" stroke-width="1.1"/>
</g>
<rect x="1650" y="219" width="252" height="764" fill="#727272"/>
<rect x="1650" y="219" width="252" height="1" fill="#808080"/>
<path d="M1661.5,244.5l5,-5" fill="none" stroke="#1a1a1a" stroke-width="2.4" stroke-linecap="round"/>
<path d="M1661.5,244.5l5,-5" fill="none" stroke="#e8e8e8" stroke-width="1" stroke-linecap="round"/>
<path d="M1668.5,231.5l6,6l-1.6,0.6l-2.4,-0.6l-2.2,2.4l0.4,3.2l-1.2,1l-6,-6l1,-1.2l3.2,0.4l2.4,-2.2l-0.6,-2.4z" fill="#d8d8d8" stroke="#1a1a1a" stroke-width="1" stroke-linejoin="round"/>
<path d="M1690.8,233.6v8.2a3.2,1.3 0 0 0 6.4,0v-8.2z" fill="url(#gCyl)" stroke="#0e2450" stroke-width="0.9"/>
<path d="M1690.8,233.6a3.2,1.3 0 0 1 6.4,0a3.2,1.3 0 0 1 -6.4,0z" fill="#cfe0fa" stroke="#0e2450" stroke-width="0.7"/>
<circle cx="1689.2" cy="242.2" r="3.7" fill="url(#gBall)" stroke="#111" stroke-width="1"/>
<circle cx="1686.2" cy="234.4" r="1.7" fill="#fffce0" stroke="#b8b428" stroke-width="1.1"/>
<path d="M1704,234.5l3.5,3.2l-3.5,3.2z" fill="#333"/>
<path d="M1731,231.5l6,2.8v7l-6,3.4l-6,-3.4v-7z" fill="url(#gCube)" stroke="#5a2c00" stroke-width="1" stroke-linejoin="round"/>
<path d="M1731,237.2l6,-2.9v7l-6,3.4z" fill="#c07018"/>
<path d="M1725,234.3l6,2.9l6,-2.9M1731,237.2v7.4" fill="none" stroke="#fde0b0" stroke-width="0.8"/>
<path d="M1731,231.5l6,2.8v7l-6,3.4l-6,-3.4v-7z" fill="none" stroke="#5a2c00" stroke-width="1" stroke-linejoin="round"/>
<text x="1742.5" y="242" font-size="11" fill="#000" textLength="57" lengthAdjust="spacingAndGlyphs">RMS TITA…</text>
<path d="M1808,234.5l3.5,3.2l-3.5,3.2z" fill="#333"/>
<path d="M1828.5,233.5h11l-5.5,10z" fill="none" stroke="#1a1a1a" stroke-width="2.8" stroke-linejoin="round"/>
<path d="M1828.5,233.5h11l-5.5,10z" fill="none" stroke="#f0f0f0" stroke-width="1.2" stroke-linejoin="round"/>
<circle cx="1828.5" cy="233.5" r="1.9" fill="#fff" stroke="#1a1a1a" stroke-width="0.9"/>
<circle cx="1839.5" cy="233.5" r="1.9" fill="#fff" stroke="#1a1a1a" stroke-width="0.9"/>
<circle cx="1834" cy="243.5" r="1.9" fill="#fff" stroke="#1a1a1a" stroke-width="0.9"/>
<text x="1845.6" y="242" font-size="11" fill="#000" textLength="48.5" lengthAdjust="spacingAndGlyphs">Cube.002</text>
<line x1="1662" y1="283.5" x2="1690" y2="283.5" stroke="rgba(255,255,255,0.09)" stroke-width="1" />
<path d="M1662.5,263.5H1689.5V282.5H1662.5A4,4 0 0 1 1658.5,278.5V267.5A4,4 0 0 1 1662.5,263.5Z" fill="url(#gMenu)" stroke="#1a1a1a" stroke-width="1"/>
<path d="M1664.0,268.5h11l-5.5,10z" fill="none" stroke="#1a1a1a" stroke-width="2.8" stroke-linejoin="round"/>
<path d="M1664.0,268.5h11l-5.5,10z" fill="none" stroke="#f0f0f0" stroke-width="1.2" stroke-linejoin="round"/>
<circle cx="1664.0" cy="268.5" r="1.9" fill="#fff" stroke="#1a1a1a" stroke-width="0.9"/>
<circle cx="1675.0" cy="268.5" r="1.9" fill="#fff" stroke="#1a1a1a" stroke-width="0.9"/>
<circle cx="1669.5" cy="278.5" r="1.9" fill="#fff" stroke="#1a1a1a" stroke-width="0.9"/>
<path d="M1680.5,271.5L1683.5,266.5L1686.5,271.5Z M1680.5,274.5L1683.5,279.5L1686.5,274.5Z" fill="#999"/>
<line x1="1689" y1="283.5" x2="1874" y2="283.5" stroke="rgba(255,255,255,0.09)" stroke-width="1" />
<path d="M1689.5,263.5H1873.5V282.5H1689.5V263.5Z" fill="url(#gText)" stroke="#1a1a1a" stroke-width="1"/>
<text x="1696.4" y="278.2" font-size="11" fill="#000" textLength="48.5" lengthAdjust="spacingAndGlyphs">Cube.002</text>
<line x1="1873" y1="283.5" x2="1890" y2="283.5" stroke="rgba(255,255,255,0.09)" stroke-width="1" />
<path d="M1873.5,263.5H1889.5A4,4 0 0 1 1893.5,267.5V278.5A4,4 0 0 1 1889.5,282.5H1873.5V263.5Z" fill="url(#gTool)" stroke="#1a1a1a" stroke-width="1"/>
<text x="1883.5" y="278.2" font-size="11" fill="#000" text-anchor="middle">F</text>
<rect x="1655" y="290" width="242" height="1" fill="#333333"/>
<rect x="1655" y="291" width="242" height="1" fill="#8a8a8a"/>
<path d="M1663,299h8.4l-4.2,9.2z" fill="#2b2b2b"/>
<text x="1675.6" y="306.8" font-size="12" fill="#000" textLength="45.6" lengthAdjust="spacingAndGlyphs">Normals</text>
<rect x="1881" y="302" width="1" height="1" fill="#dcdcdc"/>
<rect x="1881" y="303" width="1" height="1" fill="#1c1c1c"/>
<rect x="1881" y="305" width="1" height="1" fill="#dcdcdc"/>
<rect x="1881" y="306" width="1" height="1" fill="#1c1c1c"/>
<rect x="1884" y="302" width="1" height="1" fill="#dcdcdc"/>
<rect x="1884" y="303" width="1" height="1" fill="#1c1c1c"/>
<rect x="1884" y="305" width="1" height="1" fill="#dcdcdc"/>
<rect x="1884" y="306" width="1" height="1" fill="#1c1c1c"/>
<rect x="1887" y="302" width="1" height="1" fill="#dcdcdc"/>
<rect x="1887" y="303" width="1" height="1" fill="#1c1c1c"/>
<rect x="1887" y="305" width="1" height="1" fill="#dcdcdc"/>
<rect x="1887" y="306" width="1" height="1" fill="#1c1c1c"/>
<rect x="1890" y="302" width="1" height="1" fill="#dcdcdc"/>
<rect x="1890" y="303" width="1" height="1" fill="#1c1c1c"/>
<rect x="1890" y="305" width="1" height="1" fill="#dcdcdc"/>
<rect x="1890" y="306" width="1" height="1" fill="#1c1c1c"/>
<path d="M1664.5,327.5H1671.5A3,3 0 0 1 1674.5,330.5V337.5A3,3 0 0 1 1671.5,340.5H1664.5A3,3 0 0 1 1661.5,337.5V330.5A3,3 0 0 1 1664.5,327.5Z" fill="none" stroke="rgba(255,255,255,0.09)" stroke-width="1"/>
<path d="M1664.5,326.5H1671.5A3,3 0 0 1 1674.5,329.5V336.5A3,3 0 0 1 1671.5,339.5H1664.5A3,3 0 0 1 1661.5,336.5V329.5A3,3 0 0 1 1664.5,326.5Z" fill="url(#gOpt)" stroke="#1e1e1e" stroke-width="1"/>
<text x="1682.2" y="338" font-size="11" fill="#000" textLength="64" lengthAdjust="spacingAndGlyphs">Auto Smooth</text>
<path d="M1786.5,327.5H1793.5A3,3 0 0 1 1796.5,330.5V337.5A3,3 0 0 1 1793.5,340.5H1786.5A3,3 0 0 1 1783.5,337.5V330.5A3,3 0 0 1 1786.5,327.5Z" fill="none" stroke="rgba(255,255,255,0.09)" stroke-width="1"/>
<path d="M1786.5,326.5H1793.5A3,3 0 0 1 1796.5,329.5V336.5A3,3 0 0 1 1793.5,339.5H1786.5A3,3 0 0 1 1783.5,336.5V329.5A3,3 0 0 1 1786.5,326.5Z" fill="url(#gOpt)" stroke="#1e1e1e" stroke-width="1"/>
<text x="1805.2" y="338" font-size="11" fill="#000" textLength="65" lengthAdjust="spacingAndGlyphs">Double Sided</text>
<path d="M1668.0,346.5H1762.0A9.5,9.5 0 0 1 1771.5,356.0V356.0A9.5,9.5 0 0 1 1762.0,365.5H1668.0A9.5,9.5 0 0 1 1658.5,356.0V356.0A9.5,9.5 0 0 1 1668.0,346.5Z" fill="none" stroke="rgba(255,255,255,0.09)" stroke-width="1"/>
<path d="M1668.0,345.5H1762.0A9.5,9.5 0 0 1 1771.5,355.0V355.0A9.5,9.5 0 0 1 1762.0,364.5H1668.0A9.5,9.5 0 0 1 1658.5,355.0V355.0A9.5,9.5 0 0 1 1668.0,345.5Z" fill="url(#gNumDis)" stroke="#4a4a4a" stroke-width="1"/>
<path d="M1663.5,355l4,-3.2v6.4z" fill="#7e7e7e"/>
<path d="M1766.5,355l-4,-3.2v6.4z" fill="#7e7e7e"/>
<text x="1673" y="360" font-size="11" fill="#4c4c4c" textLength="31.5" lengthAdjust="spacingAndGlyphs">Angle:</text>
<text x="1730" y="360" font-size="11" fill="#4c4c4c" textLength="25.5" lengthAdjust="spacingAndGlyphs">180°</text>
<rect x="1655" y="372" width="242" height="1" fill="#333333"/>
<rect x="1655" y="373" width="242" height="1" fill="#8a8a8a"/>
<path d="M1663.2,381.3v9.2l8,-4.6z" fill="#2b2b2b"/>
<text x="1675.6" y="388.8" font-size="12" fill="#000" textLength="78.6" lengthAdjust="spacingAndGlyphs">Texture Space</text>
<rect x="1881" y="384" width="1" height="1" fill="#dcdcdc"/>
<rect x="1881" y="385" width="1" height="1" fill="#1c1c1c"/>
<rect x="1881" y="387" width="1" height="1" fill="#dcdcdc"/>
<rect x="1881" y="388" width="1" height="1" fill="#1c1c1c"/>
<rect x="1884" y="384" width="1" height="1" fill="#dcdcdc"/>
<rect x="1884" y="385" width="1" height="1" fill="#1c1c1c"/>
<rect x="1884" y="387" width="1" height="1" fill="#dcdcdc"/>
<rect x="1884" y="388" width="1" height="1" fill="#1c1c1c"/>
<rect x="1887" y="384" width="1" height="1" fill="#dcdcdc"/>
<rect x="1887" y="385" width="1" height="1" fill="#1c1c1c"/>
<rect x="1887" y="387" width="1" height="1" fill="#dcdcdc"/>
<rect x="1887" y="388" width="1" height="1" fill="#1c1c1c"/>
<rect x="1890" y="384" width="1" height="1" fill="#dcdcdc"/>
<rect x="1890" y="385" width="1" height="1" fill="#1c1c1c"/>
<rect x="1890" y="387" width="1" height="1" fill="#dcdcdc"/>
<rect x="1890" y="388" width="1" height="1" fill="#1c1c1c"/>
<rect x="1655" y="396" width="242" height="1" fill="#333333"/>
<rect x="1655" y="397" width="242" height="1" fill="#8a8a8a"/>
<path d="M1663,405h8.4l-4.2,9.2z" fill="#2b2b2b"/>
<text x="1675.6" y="412.8" font-size="12" fill="#000" textLength="79.5" lengthAdjust="spacingAndGlyphs">Vertex Groups</text>
<rect x="1881" y="408" width="1" height="1" fill="#dcdcdc"/>
<rect x="1881" y="409" width="1" height="1" fill="#1c1c1c"/>
<rect x="1881" y="411" width="1" height="1" fill="#dcdcdc"/>
<rect x="1881" y="412" width="1" height="1" fill="#1c1c1c"/>
<rect x="1884" y="408" width="1" height="1" fill="#dcdcdc"/>
<rect x="1884" y="409" width="1" height="1" fill="#1c1c1c"/>
<rect x="1884" y="411" width="1" height="1" fill="#dcdcdc"/>
<rect x="1884" y="412" width="1" height="1" fill="#1c1c1c"/>
<rect x="1887" y="408" width="1" height="1" fill="#dcdcdc"/>
<rect x="1887" y="409" width="1" height="1" fill="#1c1c1c"/>
<rect x="1887" y="411" width="1" height="1" fill="#dcdcdc"/>
<rect x="1887" y="412" width="1" height="1" fill="#1c1c1c"/>
<rect x="1890" y="408" width="1" height="1" fill="#dcdcdc"/>
<rect x="1890" y="409" width="1" height="1" fill="#1c1c1c"/>
<rect x="1890" y="411" width="1" height="1" fill="#dcdcdc"/>
<rect x="1890" y="412" width="1" height="1" fill="#1c1c1c"/>
<path d="M1662.5,429.5H1862.0A4,4 0 0 1 1866.0,433.5V487.5A4,4 0 0 1 1862.0,491.5H1662.5A4,4 0 0 1 1658.5,487.5V433.5A4,4 0 0 1 1662.5,429.5Z" fill="#838383" stroke="#3c3c3c" stroke-width="1"/>
<circle cx="1672.5" cy="482" r="3.5" fill="none" stroke="#4a4a4a" stroke-width="1"/>
<path d="M1670.5,482h4M1672.5,480v4" fill="none" stroke="#4a4a4a" stroke-width="1"/>
<path d="M1764,480.5h14M1764,483.5h14" fill="none" stroke="#2a2a2a" stroke-width="1"/>
<path d="M1764,481.5h14M1764,484.5h14" fill="none" stroke="#b8b8b8" stroke-width="1"/>
<path d="M1878.5,429.5H1889.5A4,4 0 0 1 1893.5,433.5V448.5H1874.5V433.5A4,4 0 0 1 1878.5,429.5Z" fill="url(#gTool)" stroke="#1a1a1a" stroke-width="1"/>
<path d="M1878.4,439h11.2M1884,433.4v11.2" fill="none" stroke="#222" stroke-width="3.6"/>
<path d="M1879.3,439h9.4M1884,434.3v9.4" fill="none" stroke="#fff" stroke-width="1.8"/>
<path d="M1874.5,448.5H1893.5V468.5H1874.5V448.5Z" fill="#8a8a8a" stroke="#555" stroke-width="1"/>
<path d="M1878.4,458h11.2" fill="none" stroke="#7c7c7c" stroke-width="3.6"/>
<path d="M1879.3,458h9.4" fill="none" stroke="#a6a6a6" stroke-width="1.8"/>
<path d="M1874.5,469.5H1893.5V485.5A4,4 0 0 1 1889.5,489.5H1878.5A4,4 0 0 1 1874.5,485.5V469.5Z" fill="none" stroke="rgba(255,255,255,0.09)" stroke-width="1"/>
<path d="M1874.5,468.5H1893.5V484.5A4,4 0 0 1 1889.5,488.5H1878.5A4,4 0 0 1 1874.5,484.5V468.5Z" fill="url(#gMenu)" stroke="#1a1a1a" stroke-width="1"/>
<path d="M1878.8,475.3h9.6l-4.8,8.8z" fill="#0a0a0a"/>
<path d="M1888,475.6l-4.2,8.2h-1.6" fill="none" stroke="#f4f4f4" stroke-width="1.1"/>
<rect x="1874.5" y="448" width="19" height="1" fill="#1c1c1c"/>
<rect x="1874.5" y="468" width="19" height="1" fill="#1c1c1c"/>
<rect x="1655" y="499" width="242" height="1" fill="#333333"/>
<rect x="1655" y="500" width="242" height="1" fill="#8a8a8a"/>
<path d="M1663,508h8.4l-4.2,9.2z" fill="#2b2b2b"/>
<text x="1675.6" y="515.8" font-size="12" fill="#000" textLength="64.7" lengthAdjust="spacingAndGlyphs">Shape Keys</text>
<rect x="1881" y="511" width="1" height="1" fill="#dcdcdc"/>
<rect x="1881" y="512" width="1" height="1" fill="#1c1c1c"/>
<rect x="1881" y="514" width="1" height="1" fill="#dcdcdc"/>
<rect x="1881" y="515" width="1" height="1" fill="#1c1c1c"/>
<rect x="1884" y="511" width="1" height="1" fill="#dcdcdc"/>
<rect x="1884" y="512" width="1" height="1" fill="#1c1c1c"/>
<rect x="1884" y="514" width="1" height="1" fill="#dcdcdc"/>
<rect x="1884" y="515" width="1" height="1" fill="#1c1c1c"/>
<rect x="1887" y="511" width="1" height="1" fill="#dcdcdc"/>
<rect x="1887" y="512" width="1" height="1" fill="#1c1c1c"/>
<rect x="1887" y="514" width="1" height="1" fill="#dcdcdc"/>
<rect x="1887" y="515" width="1" height="1" fill="#1c1c1c"/>
<rect x="1890" y="511" width="1" height="1" fill="#dcdcdc"/>
<rect x="1890" y="512" width="1" height="1" fill="#1c1c1c"/>
<rect x="1890" y="514" width="1" height="1" fill="#dcdcdc"/>
<rect x="1890" y="515" width="1" height="1" fill="#1c1c1c"/>
<path d="M1662.5,532.5H1862.0A4,4 0 0 1 1866.0,536.5V590.5A4,4 0 0 1 1862.0,594.5H1662.5A4,4 0 0 1 1658.5,590.5V536.5A4,4 0 0 1 1662.5,532.5Z" fill="#838383" stroke="#3c3c3c" stroke-width="1"/>
<circle cx="1672.5" cy="585" r="3.5" fill="none" stroke="#4a4a4a" stroke-width="1"/>
<path d="M1670.5,585h4M1672.5,583v4" fill="none" stroke="#4a4a4a" stroke-width="1"/>
<path d="M1764,583.5h14M1764,586.5h14" fill="none" stroke="#2a2a2a" stroke-width="1"/>
<path d="M1764,584.5h14M1764,587.5h14" fill="none" stroke="#b8b8b8" stroke-width="1"/>
<path d="M1878.5,532.5H1889.5A4,4 0 0 1 1893.5,536.5V551.5H1874.5V536.5A4,4 0 0 1 1878.5,532.5Z" fill="#8a8a8a" stroke="#555" stroke-width="1"/>
<path d="M1878.4,542h11.2M1884,536.4v11.2" fill="none" stroke="#7c7c7c" stroke-width="3.6"/>
<path d="M1879.3,542h9.4M1884,537.3v9.4" fill="none" stroke="#a6a6a6" stroke-width="1.8"/>
<path d="M1874.5,551.5H1893.5V571.5H1874.5V551.5Z" fill="#8a8a8a" stroke="#555" stroke-width="1"/>
<path d="M1878.4,561h11.2" fill="none" stroke="#7c7c7c" stroke-width="3.6"/>
<path d="M1879.3,561h9.4" fill="none" stroke="#a6a6a6" stroke-width="1.8"/>
<path d="M1874.5,572.5H1893.5V588.5A4,4 0 0 1 1889.5,592.5H1878.5A4,4 0 0 1 1874.5,588.5V572.5Z" fill="none" stroke="rgba(255,255,255,0.09)" stroke-width="1"/>
<path d="M1874.5,571.5H1893.5V587.5A4,4 0 0 1 1889.5,591.5H1878.5A4,4 0 0 1 1874.5,587.5V571.5Z" fill="url(#gMenu)" stroke="#1a1a1a" stroke-width="1"/>
<path d="M1878.8,578.3h9.6l-4.8,8.8z" fill="#0a0a0a"/>
<path d="M1888,578.6l-4.2,8.2h-1.6" fill="none" stroke="#f4f4f4" stroke-width="1.1"/>
<rect x="1874.5" y="571" width="19" height="1" fill="#1c1c1c"/>
<rect x="1655" y="602" width="242" height="1" fill="#333333"/>
<rect x="1655" y="603" width="242" height="1" fill="#8a8a8a"/>
<path d="M1663,611h8.4l-4.2,9.2z" fill="#2b2b2b"/>
<text x="1675.6" y="618.8" font-size="12" fill="#000" textLength="48.7" lengthAdjust="spacingAndGlyphs">UV Maps</text>
<rect x="1881" y="614" width="1" height="1" fill="#dcdcdc"/>
<rect x="1881" y="615" width="1" height="1" fill="#1c1c1c"/>
<rect x="1881" y="617" width="1" height="1" fill="#dcdcdc"/>
<rect x="1881" y="618" width="1" height="1" fill="#1c1c1c"/>
<rect x="1884" y="614" width="1" height="1" fill="#dcdcdc"/>
<rect x="1884" y="615" width="1" height="1" fill="#1c1c1c"/>
<rect x="1884" y="617" width="1" height="1" fill="#dcdcdc"/>
<rect x="1884" y="618" width="1" height="1" fill="#1c1c1c"/>
<rect x="1887" y="614" width="1" height="1" fill="#dcdcdc"/>
<rect x="1887" y="615" width="1" height="1" fill="#1c1c1c"/>
<rect x="1887" y="617" width="1" height="1" fill="#dcdcdc"/>
<rect x="1887" y="618" width="1" height="1" fill="#1c1c1c"/>
<rect x="1890" y="614" width="1" height="1" fill="#dcdcdc"/>
<rect x="1890" y="615" width="1" height="1" fill="#1c1c1c"/>
<rect x="1890" y="617" width="1" height="1" fill="#dcdcdc"/>
<rect x="1890" y="618" width="1" height="1" fill="#1c1c1c"/>
<path d="M1662.5,635.5H1862.0A4,4 0 0 1 1866.0,639.5V673.5A4,4 0 0 1 1862.0,677.5H1662.5A4,4 0 0 1 1658.5,673.5V639.5A4,4 0 0 1 1662.5,635.5Z" fill="#838383" stroke="#3c3c3c" stroke-width="1"/>
<circle cx="1672.5" cy="668" r="3.5" fill="none" stroke="#4a4a4a" stroke-width="1"/>
<path d="M1670.5,668h4M1672.5,666v4" fill="none" stroke="#4a4a4a" stroke-width="1"/>
<path d="M1764,666.5h14M1764,669.5h14" fill="none" stroke="#2a2a2a" stroke-width="1"/>
<path d="M1764,667.5h14M1764,670.5h14" fill="none" stroke="#b8b8b8" stroke-width="1"/>
<path d="M1878.5,635.5H1889.5A4,4 0 0 1 1893.5,639.5V655.0H1874.5V639.5A4,4 0 0 1 1878.5,635.5Z" fill="url(#gTool)" stroke="#1a1a1a" stroke-width="1"/>
<path d="M1878.4,645h11.2M1884,639.4v11.2" fill="none" stroke="#222" stroke-width="3.6"/>
<path d="M1879.3,645h9.4M1884,640.3v9.4" fill="none" stroke="#fff" stroke-width="1.8"/>
<path d="M1874.5,656.0H1893.5V671.0A4,4 0 0 1 1889.5,675.0H1878.5A4,4 0 0 1 1874.5,671.0V656.0Z" fill="none" stroke="rgba(255,255,255,0.09)" stroke-width="1"/>
<path d="M1874.5,655.0H1893.5V670.0A4,4 0 0 1 1889.5,674.0H1878.5A4,4 0 0 1 1874.5,670.0V655.0Z" fill="url(#gTool)" stroke="#1a1a1a" stroke-width="1"/>
<path d="M1878.4,664.5h11.2" fill="none" stroke="#222" stroke-width="3.6"/>
<path d="M1879.3,664.5h9.4" fill="none" stroke="#fff" stroke-width="1.8"/>
<rect x="1874.5" y="654.5" width="19" height="1" fill="#1c1c1c"/>
<rect x="1655" y="685" width="242" height="1" fill="#333333"/>
<rect x="1655" y="686" width="242" height="1" fill="#8a8a8a"/>
<path d="M1663,694h8.4l-4.2,9.2z" fill="#2b2b2b"/>
<text x="1675.6" y="701.8" font-size="12" fill="#000" textLength="74.3" lengthAdjust="spacingAndGlyphs">Vertex Colors</text>
<rect x="1881" y="697" width="1" height="1" fill="#dcdcdc"/>
<rect x="1881" y="698" width="1" height="1" fill="#1c1c1c"/>
<rect x="1881" y="700" width="1" height="1" fill="#dcdcdc"/>
<rect x="1881" y="701" width="1" height="1" fill="#1c1c1c"/>
<rect x="1884" y="697" width="1" height="1" fill="#dcdcdc"/>
<rect x="1884" y="698" width="1" height="1" fill="#1c1c1c"/>
<rect x="1884" y="700" width="1" height="1" fill="#dcdcdc"/>
<rect x="1884" y="701" width="1" height="1" fill="#1c1c1c"/>
<rect x="1887" y="697" width="1" height="1" fill="#dcdcdc"/>
<rect x="1887" y="698" width="1" height="1" fill="#1c1c1c"/>
<rect x="1887" y="700" width="1" height="1" fill="#dcdcdc"/>
<rect x="1887" y="701" width="1" height="1" fill="#1c1c1c"/>
<rect x="1890" y="697" width="1" height="1" fill="#dcdcdc"/>
<rect x="1890" y="698" width="1" height="1" fill="#1c1c1c"/>
<rect x="1890" y="700" width="1" height="1" fill="#dcdcdc"/>
<rect x="1890" y="701" width="1" height="1" fill="#1c1c1c"/>
<path d="M1662.5,718.5H1862.0A4,4 0 0 1 1866.0,722.5V756.5A4,4 0 0 1 1862.0,760.5H1662.5A4,4 0 0 1 1658.5,756.5V722.5A4,4 0 0 1 1662.5,718.5Z" fill="#838383" stroke="#3c3c3c" stroke-width="1"/>
<circle cx="1672.5" cy="751" r="3.5" fill="none" stroke="#4a4a4a" stroke-width="1"/>
<path d="M1670.5,751h4M1672.5,749v4" fill="none" stroke="#4a4a4a" stroke-width="1"/>
<path d="M1764,749.5h14M1764,752.5h14" fill="none" stroke="#2a2a2a" stroke-width="1"/>
<path d="M1764,750.5h14M1764,753.5h14" fill="none" stroke="#b8b8b8" stroke-width="1"/>
<path d="M1878.5,718.5H1889.5A4,4 0 0 1 1893.5,722.5V738.0H1874.5V722.5A4,4 0 0 1 1878.5,718.5Z" fill="url(#gTool)" stroke="#1a1a1a" stroke-width="1"/>
<path d="M1878.4,728h11.2M1884,722.4v11.2" fill="none" stroke="#222" stroke-width="3.6"/>
<path d="M1879.3,728h9.4M1884,723.3v9.4" fill="none" stroke="#fff" stroke-width="1.8"/>
<path d="M1874.5,739.0H1893.5V754.0A4,4 0 0 1 1889.5,758.0H1878.5A4,4 0 0 1 1874.5,754.0V739.0Z" fill="none" stroke="rgba(255,255,255,0.09)" stroke-width="1"/>
<path d="M1874.5,738.0H1893.5V753.0A4,4 0 0 1 1889.5,757.0H1878.5A4,4 0 0 1 1874.5,753.0V738.0Z" fill="url(#gTool)" stroke="#1a1a1a" stroke-width="1"/>
<path d="M1878.4,747.5h11.2" fill="none" stroke="#222" stroke-width="3.6"/>
<path d="M1879.3,747.5h9.4" fill="none" stroke="#fff" stroke-width="1.8"/>
<rect x="1874.5" y="737.5" width="19" height="1" fill="#1c1c1c"/>
<rect x="1655" y="768" width="242" height="1" fill="#333333"/>
<rect x="1655" y="769" width="242" height="1" fill="#8a8a8a"/>
<path d="M1663.2,777.3v9.2l8,-4.6z" fill="#2b2b2b"/>
<text x="1675.6" y="784.8" font-size="12" fill="#000" textLength="85.3" lengthAdjust="spacingAndGlyphs">Geometry Data</text>
<rect x="1881" y="780" width="1" height="1" fill="#dcdcdc"/>
<rect x="1881" y="781" width="1" height="1" fill="#1c1c1c"/>
<rect x="1881" y="783" width="1" height="1" fill="#dcdcdc"/>
<rect x="1881" y="784" width="1" height="1" fill="#1c1c1c"/>
<rect x="1884" y="780" width="1" height="1" fill="#dcdcdc"/>
<rect x="1884" y="781" width="1" height="1" fill="#1c1c1c"/>
<rect x="1884" y="783" width="1" height="1" fill="#dcdcdc"/>
<rect x="1884" y="784" width="1" height="1" fill="#1c1c1c"/>
<rect x="1887" y="780" width="1" height="1" fill="#dcdcdc"/>
<rect x="1887" y="781" width="1" height="1" fill="#1c1c1c"/>
<rect x="1887" y="783" width="1" height="1" fill="#dcdcdc"/>
<rect x="1887" y="784" width="1" height="1" fill="#1c1c1c"/>
<rect x="1890" y="780" width="1" height="1" fill="#dcdcdc"/>
<rect x="1890" y="781" width="1" height="1" fill="#1c1c1c"/>
<rect x="1890" y="783" width="1" height="1" fill="#dcdcdc"/>
<rect x="1890" y="784" width="1" height="1" fill="#1c1c1c"/>
<rect x="1655" y="792" width="242" height="1" fill="#333333"/>
<rect x="1655" y="793" width="242" height="1" fill="#8a8a8a"/>
<path d="M1663.2,801.3v9.2l8,-4.6z" fill="#2b2b2b"/>
<text x="1675.6" y="808.8" font-size="12" fill="#000" textLength="101.6" lengthAdjust="spacingAndGlyphs">Custom Properties</text>
<rect x="1881" y="804" width="1" height="1" fill="#dcdcdc"/>
<rect x="1881" y="805" width="1" height="1" fill="#1c1c1c"/>
<rect x="1881" y="807" width="1" height="1" fill="#dcdcdc"/>
<rect x="1881" y="808" width="1" height="1" fill="#1c1c1c"/>
<rect x="1884" y="804" width="1" height="1" fill="#dcdcdc"/>
<rect x="1884" y="805" width="1" height="1" fill="#1c1c1c"/>
<rect x="1884" y="807" width="1" height="1" fill="#dcdcdc"/>
<rect x="1884" y="808" width="1" height="1" fill="#1c1c1c"/>
<rect x="1887" y="804" width="1" height="1" fill="#dcdcdc"/>
<rect x="1887" y="805" width="1" height="1" fill="#1c1c1c"/>
<rect x="1887" y="807" width="1" height="1" fill="#dcdcdc"/>
<rect x="1887" y="808" width="1" height="1" fill="#1c1c1c"/>
<rect x="1890" y="804" width="1" height="1" fill="#dcdcdc"/>
<rect x="1890" y="805" width="1" height="1" fill="#1c1c1c"/>
<rect x="1890" y="807" width="1" height="1" fill="#dcdcdc"/>
<rect x="1890" y="808" width="1" height="1" fill="#1c1c1c"/>
<rect x="1655" y="816" width="242" height="1" fill="#333333"/>
<rect x="1655" y="817" width="242" height="1" fill="#8a8a8a"/>
<path d="M1663,825h8.4l-4.2,9.2z" fill="#2b2b2b"/>
<text x="1675.6" y="832.8" font-size="12" fill="#000" textLength="97.6" lengthAdjust="spacingAndGlyphs">JBeam parameter</text>
<rect x="1881" y="828" width="1" height="1" fill="#dcdcdc"/>
<rect x="1881" y="829" width="1" height="1" fill="#1c1c1c"/>
<rect x="1881" y="831" width="1" height="1" fill="#dcdcdc"/>
<rect x="1881" y="832" width="1" height="1" fill="#1c1c1c"/>
<rect x="1884" y="828" width="1" height="1" fill="#dcdcdc"/>
<rect x="1884" y="829" width="1" height="1" fill="#1c1c1c"/>
<rect x="1884" y="831" width="1" height="1" fill="#dcdcdc"/>
<rect x="1884" y="832" width="1" height="1" fill="#1c1c1c"/>
<rect x="1887" y="828" width="1" height="1" fill="#dcdcdc"/>
<rect x="1887" y="829" width="1" height="1" fill="#1c1c1c"/>
<rect x="1887" y="831" width="1" height="1" fill="#dcdcdc"/>
<rect x="1887" y="832" width="1" height="1" fill="#1c1c1c"/>
<rect x="1890" y="828" width="1" height="1" fill="#dcdcdc"/>
<rect x="1890" y="829" width="1" height="1" fill="#1c1c1c"/>
<rect x="1890" y="831" width="1" height="1" fill="#dcdcdc"/>
<rect x="1890" y="832" width="1" height="1" fill="#1c1c1c"/>
<text x="1665.5" y="863.5" font-size="11" fill="#000" textLength="32.6" lengthAdjust="spacingAndGlyphs">Name:</text>
<path d="M1745.5,850.5H1889.5A4,4 0 0 1 1893.5,854.5V865.5A4,4 0 0 1 1889.5,869.5H1745.5A4,4 0 0 1 1741.5,865.5V854.5A4,4 0 0 1 1745.5,850.5Z" fill="none" stroke="rgba(255,255,255,0.09)" stroke-width="1"/>
<path d="M1745.5,849.5H1889.5A4,4 0 0 1 1893.5,853.5V864.5A4,4 0 0 1 1889.5,868.5H1745.5A4,4 0 0 1 1741.5,864.5V853.5A4,4 0 0 1 1745.5,849.5Z" fill="url(#gText)" stroke="#1a1a1a" stroke-width="1"/>
<text x="1665.5" y="888.5" font-size="11" fill="#000" textLength="68" lengthAdjust="spacingAndGlyphs">Slot of this j…</text>
<path d="M1745.5,875.5H1889.5A4,4 0 0 1 1893.5,879.5V890.5A4,4 0 0 1 1889.5,894.5H1745.5A4,4 0 0 1 1741.5,890.5V879.5A4,4 0 0 1 1745.5,875.5Z" fill="none" stroke="rgba(255,255,255,0.09)" stroke-width="1"/>
<path d="M1745.5,874.5H1889.5A4,4 0 0 1 1893.5,878.5V889.5A4,4 0 0 1 1889.5,893.5H1745.5A4,4 0 0 1 1741.5,889.5V878.5A4,4 0 0 1 1745.5,874.5Z" fill="url(#gText)" stroke="#1a1a1a" stroke-width="1"/>
<text x="1749.5" y="889" font-size="11" fill="#000">main</text>
<text x="1665.5" y="913.5" font-size="11" fill="#000" textLength="65" lengthAdjust="spacingAndGlyphs">Prefix of no…</text>
<path d="M1745.5,900.5H1889.5A4,4 0 0 1 1893.5,904.5V915.5A4,4 0 0 1 1889.5,919.5H1745.5A4,4 0 0 1 1741.5,915.5V904.5A4,4 0 0 1 1745.5,900.5Z" fill="none" stroke="rgba(255,255,255,0.09)" stroke-width="1"/>
<path d="M1745.5,899.5H1889.5A4,4 0 0 1 1893.5,903.5V914.5A4,4 0 0 1 1889.5,918.5H1745.5A4,4 0 0 1 1741.5,914.5V903.5A4,4 0 0 1 1745.5,899.5Z" fill="url(#gText)" stroke="#1a1a1a" stroke-width="1"/>
<text x="1749.5" y="914" font-size="11" fill="#000">n</text>
<rect x="1650" y="27" width="1" height="165" fill="#7a7a7a"/>
<rect x="1650" y="193" width="1" height="790" fill="#7a7a7a"/>
<clipPath id="cc10"><rect x="1650" y="971" width="12" height="12"/></clipPath><g clip-path="url(#cc10)">
<path d="M1649,970L1663,984" fill="none" stroke="#1c1c1c" stroke-width="1.15"/>
<path d="M1649,971.6L1661.4,984" fill="none" stroke="#b4b4b4" stroke-width="1.1"/>
<path d="M1649,973.2L1659.8,984" fill="none" stroke="#1c1c1c" stroke-width="1.15"/>
<path d="M1649,974.8000000000001L1658.2,984" fill="none" stroke="#b4b4b4" stroke-width="1.1"/>
<path d="M1649,976.4L1656.6,984" fill="none" stroke="#1c1c1c" stroke-width="1.15"/>
<path d="M1649,978.0L1655.0,984" fill="none" stroke="#b4b4b4" stroke-width="1.1"/>
<path d="M1649,979.6L1653.4,984" fill="none" stroke="#1c1c1c" stroke-width="1.15"/>
<path d="M1649,981.2L1651.8000000000002,984" fill="none" stroke="#b4b4b4" stroke-width="1.1"/>
</g>
</g>
</svg></body></html>
